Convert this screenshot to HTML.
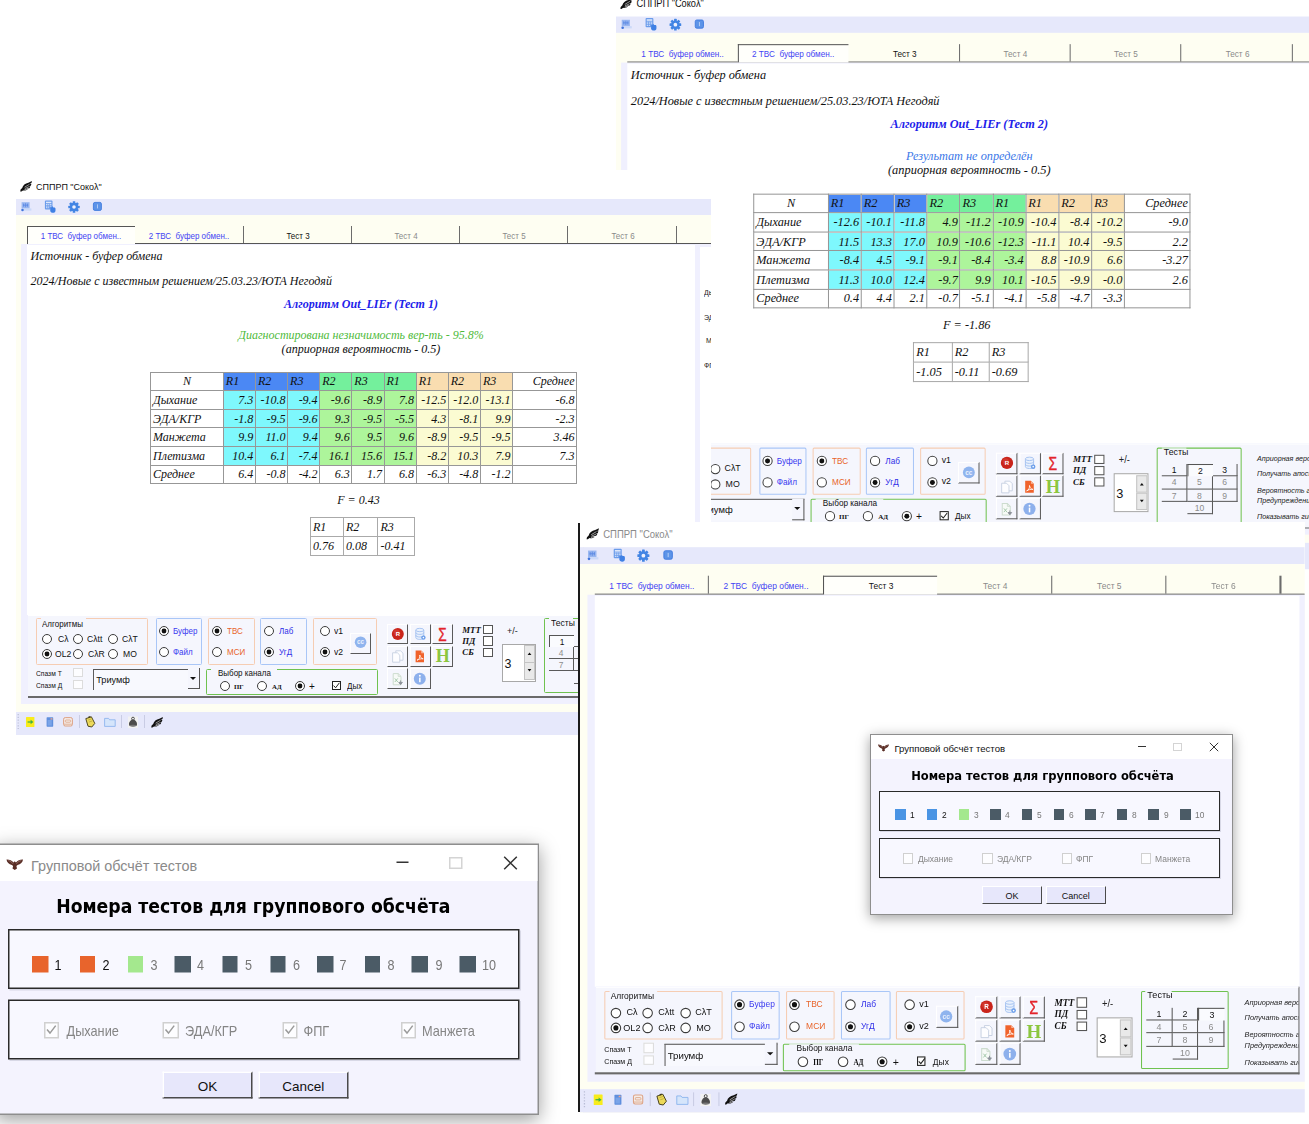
<!DOCTYPE html>
<html lang="ru"><head><meta charset="utf-8"><title>СППРП "Сокоλ"</title>
<style>
html,body{margin:0;padding:0;background:#fff}
body{width:1309px;height:1124px;position:relative;overflow:hidden;font-family:"Liberation Sans", "DejaVu Sans", sans-serif}
.win,.dlg{position:absolute;overflow:hidden;background:#fff;transform-origin:0 0}
.win *,.dlg *{position:absolute;box-sizing:border-box}
.t{line-height:1;white-space:nowrap;color:#111;font-family:"Liberation Sans", "DejaVu Sans", sans-serif}
.se{font-family:"Liberation Serif", "DejaVu Serif", serif}
.dj{font-family:"DejaVu Sans Condensed","Liberation Sans",sans-serif}
.i{font-style:italic}.b{font-weight:700}
.ic{display:block;overflow:visible}
svg text{position:static}
.rd{width:10px;height:10px;border:1px solid #3c3c3c;border-radius:50%;background:#fff}
.rd.on:after{content:"";position:absolute;left:2px;top:2px;width:4px;height:4px;border-radius:50%;background:#111;box-shadow:0 0 0 .4px #111}
.pn{background:#f5f6fd}
.gb{border:1px solid #ccc;border-radius:1.5px}
.gb b{top:-1px;height:1px;background:#f5f6fd}
.cb{border:1px solid #555;background:#fff}
.cb.dis{border-color:#dcdcdc;background:#fdfdff}
.cb.dis2{border-color:#d0d0d0;background:#fdfdff}
.cb.chk{border-color:#222}
.cb svg{left:-1px;top:-1px}
.tb{width:20.8px;height:20.8px;border-right:1.6px solid #5a5a5a;border-bottom:1.6px solid #5a5a5a;border-top:1px solid #fff;border-left:1px solid #fff;background:#f5f6fd}
.tb svg{left:-0.5px;top:-0.5px;position:absolute}
.tb.cc{width:21.4px;height:21.2px}
.cmb{border-top:1.8px solid #555;border-left:1.6px solid #5c5c5c;background:#f8f9fe}
.cmb i{right:0;top:0;width:12px;height:21px;border-right:1.4px solid #555;border-bottom:1.4px solid #555;background:#f5f6fd;margin-top:-1.6px}
.cmb i:after{content:"";position:absolute;left:2px;top:8.6px;border:3px solid transparent;border-top:3.4px solid #111;border-bottom:none}
.spn{width:34px;height:38px;border:1px solid #a8a8a8;background:#fff}
.spn em{left:21.2px;width:11px;height:17.4px;background:#e9e9e9;border:1px solid #c4c4c4}
.tt{width:24.6px;height:12.2px;font-size:8.4px;line-height:13px;text-align:center;color:#8c8c8c;border-right:1.4px solid #5a5a5a;border-bottom:1.4px solid #5a5a5a}
.tt.en{color:#111}
.tt.sel{border:none;border-top:1.4px solid #555;border-left:1.4px solid #555;background:#fafbfe}
table.rt{border-collapse:collapse;table-layout:fixed;font:italic 12px "Liberation Serif", "DejaVu Serif", serif;color:#111}
table.rt *{position:static}
table.rt td{border:1px solid #979797;height:18.62px;padding:0 1.6px 0 2px;text-align:right;line-height:16px;white-space:nowrap;overflow:hidden;box-sizing:border-box}
table.rt td.l{text-align:left}table.rt td.c{text-align:center}
table.rt.sm td{height:18.8px;border-color:#aaa}
.dlg{background:#f4f3fe;box-shadow:0 0 0 1px #8e8e8e,0 3px 12px 1px rgba(0,0,0,.38);overflow:visible}
.dbx{border:1px solid #2a2a2a;box-shadow:1px 1px 0 #d8d8e6;background:#f8f8ff}
.db{height:18.3px;background:#e7e7fb;border-right:1.6px solid #4a4a4a;border-bottom:1.6px solid #4a4a4a;border-top:1px solid #fff;border-left:1px solid #fff;font-size:9px;line-height:18.4px;text-align:center;color:#111}
.abs{position:absolute}
</style></head>
<body>
<div class="win" style="left:616.00px;top:-4.6px;width:700px;height:560.8px;transform:scale(1.024);"><svg class="ic" style="left:3.5px;top:3.3px" width="12" height="11" viewBox="0 0 12 11"><path d="M0.2 10.4 L0.6 8.6 L2.2 7 C2.8 4.4 5.2 2.4 8.4 1.8 L11.9 0.1 L11.5 2.1 L9.8 2.9 L11.4 3 L10.8 4.7 L8.8 5.2 L10.4 5.6 L9.4 7.2 L6.6 7.6 L7.8 8.3 C6.2 9.6 4.2 9.8 3 9.4 L1.4 10.6 Z" fill="#111"/><path d="M4.6 6.2 L9.6 3.2 M4.8 7.6 L9.2 5.6 M4.4 8.8 L7.4 8" stroke="#fff" stroke-width="0.55" fill="none"/></svg><span class="t " style="top:4.40px;font-size:9.81px;left:19.60px;transform:scaleX(0.9174);transform-origin:0 0;color:#111;">СППРП "Сокоλ"</span><div class="abs" style="left:0.00px;top:21.00px;width:700.00px;height:16.00px;background:#e6e8fb"></div><svg class="ic" style="left:4.6px;top:23.6px" width="11" height="10" viewBox="0 0 11 10"><rect x="0.6" y="0.2" width="8" height="6.4" fill="#98b6f0"/><path d="M2.6 1.6v3.2M4.6 1.2v4M6.6 1.6v3.2M2 3.2h5.2" stroke="#5a88e3" stroke-width="0.8" fill="none"/><rect x="0.6" y="6.4" width="9.8" height="2.2" fill="#cbd9f8"/><circle cx="1.5" cy="8" r="1.25" fill="#3f74dc"/></svg><svg class="ic" style="left:28px;top:22px" width="12" height="13" viewBox="0 0 12 13"><rect x="0.9" y="0.5" width="7.6" height="9" rx="0.9" fill="#6b9ceb"/><rect x="2" y="1.7" width="5.4" height="1.5" fill="#dfe9fb"/><path d="M2 4.5h5.4M2 6.1h5.4M2 7.7h3.4" stroke="#dfe9fb" stroke-width="0.9"/><path d="M3.75 4v4.4M5.6 4v4.4" stroke="#6b9ceb" stroke-width="0.7"/><path d="M6.6 7.4h1l0.4-0.8h0.9l0.4 0.8h0.9c0.9 0 1.3 0.6 1.3 1.4v1.6c0 1.4-1 2.3-2.5 2.3s-2.8-0.9-2.8-2.3z" fill="#3f80e4"/></svg><svg class="ic" style="left:51.6px;top:22.8px" width="12" height="12" viewBox="0 0 12 12"><g fill="#4285e4"><circle cx="6" cy="6" r="4.2"/><rect x="4.7" y="0.3" width="2.6" height="11.4" rx="0.5" transform="rotate(0 6 6)"/><rect x="4.7" y="0.3" width="2.6" height="11.4" rx="0.5" transform="rotate(45 6 6)"/><rect x="4.7" y="0.3" width="2.6" height="11.4" rx="0.5" transform="rotate(90 6 6)"/><rect x="4.7" y="0.3" width="2.6" height="11.4" rx="0.5" transform="rotate(135 6 6)"/></g><circle cx="6" cy="6" r="1.8" fill="#eef1fd"/></svg><svg class="ic" style="left:76.6px;top:24.4px" width="9" height="9" viewBox="0 0 9 9"><rect x="0.4" y="0.4" width="8" height="8" rx="1.5" fill="#5d94e8" stroke="#3f7ade" stroke-width="0.9"/><rect x="4" y="2.4" width="0.9" height="4" fill="#b9d0f6"/></svg><div class="abs" style="left:0.00px;top:37.00px;width:700.00px;height:497.80px;background:#fefef2"></div><div class="abs" style="left:11.00px;top:64.70px;width:689.00px;height:1.35px;background:#555"></div><span class="t " style="top:53.52px;font-size:8.72px;left:-84.85px;width:300px;text-align:center;transform:scaleX(0.9174);transform-origin:50% 0;color:#4444f4;white-space:pre;">1 ТВС  буфер обмен..</span><div class="abs" style="left:119.30px;top:48.40px;width:107.80px;height:18.00px;background:#fffffb;border-top:1.6px solid #555;border-left:1.6px solid #555;box-sizing:border-box"></div><span class="t " style="top:53.52px;font-size:8.72px;left:23.45px;width:300px;text-align:center;transform:scaleX(0.9174);transform-origin:50% 0;color:#4444f4;white-space:pre;">2 ТВС  буфер обмен..</span><div class="abs" style="left:334.80px;top:48.40px;width:1.10px;height:17.00px;background:#6c6c6c"></div><span class="t " style="top:53.52px;font-size:8.72px;left:131.75px;width:300px;text-align:center;transform:scaleX(0.9174);transform-origin:50% 0;color:#111;white-space:pre;">Тест 3</span><div class="abs" style="left:443.10px;top:48.40px;width:1.10px;height:17.00px;background:#6c6c6c"></div><span class="t " style="top:53.52px;font-size:8.72px;left:240.05px;width:300px;text-align:center;transform:scaleX(0.9174);transform-origin:50% 0;color:#8a8a8a;white-space:pre;">Тест 4</span><div class="abs" style="left:551.40px;top:48.40px;width:1.10px;height:17.00px;background:#6c6c6c"></div><span class="t " style="top:53.52px;font-size:8.72px;left:348.35px;width:300px;text-align:center;transform:scaleX(0.9174);transform-origin:50% 0;color:#8a8a8a;white-space:pre;">Тест 5</span><div class="abs" style="left:659.70px;top:48.40px;width:1.10px;height:17.00px;background:#6c6c6c"></div><span class="t " style="top:53.52px;font-size:8.72px;left:456.65px;width:300px;text-align:center;transform:scaleX(0.9174);transform-origin:50% 0;color:#8a8a8a;white-space:pre;">Тест 6</span><div class="abs" style="left:4.60px;top:66.20px;width:695.40px;height:461.20px;background:#f0f0fe"></div><div class="abs" style="left:11.00px;top:67.10px;width:667.70px;height:371.30px;background:#fff"></div><span class="t se i" style="top:72.45px;font-size:12px;left:14.50px;">Источник - буфер обмена</span><span class="t se i" style="top:96.95px;font-size:12px;left:14.50px;">2024/Новые с известным решением/25.03.23/ЮТА Негодяй</span><span class="t se i b" style="top:119.95px;font-size:12px;left:195.00px;width:300px;text-align:center;color:#2121ea;">Алгоритм Out_LIEr (Тест 2)</span><span class="t se i" style="top:150.55px;font-size:12px;left:195.00px;width:300px;text-align:center;color:#3c78e8;">Результат не определён</span><span class="t se i" style="top:164.67px;font-size:12.1px;left:195.00px;width:300px;text-align:center;color:#111;">(априорная вероятность - 0.5)</span><table class="rt" style="left:134.00px;top:193.60px;width:426.2px"><tr><td class="c" style="width:72.8px">N</td><td class="l" style="width:32.15px;background:#4b88f4">R1</td><td class="l" style="width:32.15px;background:#4b88f4">R2</td><td class="l" style="width:32.15px;background:#4b88f4">R3</td><td class="l" style="width:32.15px;background:#74f09c">R2</td><td class="l" style="width:32.15px;background:#74f09c">R3</td><td class="l" style="width:32.15px;background:#74f09c">R1</td><td class="l" style="width:32.15px;background:#f9ddb0">R1</td><td class="l" style="width:32.15px;background:#f9ddb0">R2</td><td class="l" style="width:32.15px;background:#f9ddb0">R3</td><td style="width:64px">Среднее</td></tr><tr><td class="l">Дыхание</td><td style="background:#7ef8fd">-12.6</td><td style="background:#7ef8fd">-10.1</td><td style="background:#7ef8fd">-11.8</td><td style="background:#adf59b">4.9</td><td style="background:#adf59b">-11.2</td><td style="background:#adf59b">-10.9</td><td style="background:#fbfbd2">-10.4</td><td style="background:#fbfbd2">-8.4</td><td style="background:#fbfbd2">-10.2</td><td>-9.0</td></tr><tr><td class="l">ЭДА/КГР</td><td style="background:#7ef8fd">11.5</td><td style="background:#7ef8fd">13.3</td><td style="background:#7ef8fd">17.0</td><td style="background:#adf59b">10.9</td><td style="background:#adf59b">-10.6</td><td style="background:#adf59b">-12.3</td><td style="background:#fbfbd2">-11.1</td><td style="background:#fbfbd2">10.4</td><td style="background:#fbfbd2">-9.5</td><td>2.2</td></tr><tr><td class="l">Манжета</td><td style="background:#7ef8fd">-8.4</td><td style="background:#7ef8fd">4.5</td><td style="background:#7ef8fd">-9.1</td><td style="background:#adf59b">-9.1</td><td style="background:#adf59b">-8.4</td><td style="background:#adf59b">-3.4</td><td style="background:#fbfbd2">8.8</td><td style="background:#fbfbd2">-10.9</td><td style="background:#fbfbd2">6.6</td><td>-3.27</td></tr><tr><td class="l">Плетизма</td><td style="background:#7ef8fd">11.3</td><td style="background:#7ef8fd">10.0</td><td style="background:#7ef8fd">12.4</td><td style="background:#adf59b">-9.7</td><td style="background:#adf59b">9.9</td><td style="background:#adf59b">10.1</td><td style="background:#fbfbd2">-10.5</td><td style="background:#fbfbd2">-9.9</td><td style="background:#fbfbd2">-0.0</td><td>2.6</td></tr><tr><td class="l">Среднее</td><td>0.4</td><td>4.4</td><td>2.1</td><td>-0.7</td><td>-5.1</td><td>-4.1</td><td>-5.8</td><td>-4.7</td><td>-3.3</td><td></td></tr></table><span class="t se i" style="top:315.75px;font-size:12px;left:192.50px;width:300px;text-align:center;color:#111;">F = -1.86</span><table class="rt sm" style="left:290.20px;top:339.00px;width:111.60px"><tr><td class="l" style="width:37.6px">R1</td><td class="l" style="width:36.2px">R2</td><td class="l" style="width:37.8px">R3</td></tr><tr><td class="l">-1.05</td><td class="l">-0.11</td><td class="l">-0.69</td></tr></table><div class="pn" style="left:12px;top:438.4px;width:666.7px;height:82.6px;overflow:hidden;border-right:1.5px solid #6a6a6a"><div class="abs" style="left:0.00px;top:0.00px;width:666.70px;height:0.90px;background:#fff"></div><div class="gb" style="left:8.30px;top:3.30px;width:112.10px;height:46.50px;border-color:#f6cdb3"><b style="left:3.70px;width:45.50px"></b></div><span class="t " style="top:4.52px;font-size:8.72px;left:14.40px;transform:scaleX(0.9174);transform-origin:0 0;color:#111;">Алгоритмы</span><i class="rd" style="left:14.00px;top:19.30px"></i><span class="t " style="top:19.67px;font-size:9.37px;left:29.60px;transform:scaleX(0.9174);transform-origin:0 0;color:#111;">Cλ</span><i class="rd" style="left:44.60px;top:19.30px"></i><span class="t " style="top:19.67px;font-size:9.37px;left:59.20px;transform:scaleX(0.9174);transform-origin:0 0;color:#111;">Cλtt</span><i class="rd" style="left:80.30px;top:19.30px"></i><span class="t " style="top:19.67px;font-size:9.37px;left:94.30px;transform:scaleX(0.9174);transform-origin:0 0;color:#111;">CλT</span><i class="rd on" style="left:14.00px;top:34.20px"></i><span class="t " style="top:34.67px;font-size:9.37px;left:26.60px;transform:scaleX(0.9174);transform-origin:0 0;color:#111;">OL2</span><i class="rd" style="left:44.60px;top:34.20px"></i><span class="t " style="top:34.67px;font-size:9.37px;left:59.70px;transform:scaleX(0.9174);transform-origin:0 0;color:#111;">CλR</span><i class="rd" style="left:80.30px;top:34.20px"></i><span class="t " style="top:34.67px;font-size:9.37px;left:95.20px;transform:scaleX(0.9174);transform-origin:0 0;color:#111;">MO</span><div class="gb" style="left:127.80px;top:3.30px;width:46.50px;height:46.50px;border-color:#a9c6f7"></div><i class="rd on" style="left:131.00px;top:11.30px"></i><span class="t " style="top:12.12px;font-size:8.72px;left:145.40px;transform:scaleX(0.9174);transform-origin:0 0;color:#3a3af0;">Буфер</span><i class="rd" style="left:131.00px;top:32.40px"></i><span class="t " style="top:33.22px;font-size:8.72px;left:145.40px;transform:scaleX(0.9174);transform-origin:0 0;color:#3a3af0;">Файл</span><div class="gb" style="left:180.20px;top:3.30px;width:46.50px;height:46.50px;border-color:#f6cdb3"></div><i class="rd on" style="left:183.60px;top:11.30px"></i><span class="t " style="top:12.12px;font-size:8.72px;left:199.00px;transform:scaleX(0.9174);transform-origin:0 0;color:#e8642a;">ТВС</span><i class="rd" style="left:183.60px;top:32.40px"></i><span class="t " style="top:33.22px;font-size:8.72px;left:199.00px;transform:scaleX(0.9174);transform-origin:0 0;color:#e8642a;">МСИ</span><div class="gb" style="left:232.20px;top:3.30px;width:46.80px;height:46.50px;border-color:#a9c6f7"></div><i class="rd" style="left:235.90px;top:11.30px"></i><span class="t " style="top:12.12px;font-size:8.72px;left:251.00px;transform:scaleX(0.9174);transform-origin:0 0;color:#2f2fe8;">Лаб</span><i class="rd on" style="left:235.90px;top:32.40px"></i><span class="t " style="top:33.22px;font-size:8.72px;left:251.00px;transform:scaleX(0.9174);transform-origin:0 0;color:#2f2fe8;">УгД</span><div class="gb" style="left:284.60px;top:3.30px;width:64.70px;height:46.50px;border-color:#f6cdb3"></div><i class="rd" style="left:291.80px;top:11.30px"></i><span class="t " style="top:11.57px;font-size:9.37px;left:306.00px;transform:scaleX(0.9174);transform-origin:0 0;color:#111;">v1</span><i class="rd on" style="left:291.80px;top:32.40px"></i><span class="t " style="top:32.67px;font-size:9.37px;left:306.00px;transform:scaleX(0.9174);transform-origin:0 0;color:#111;">v2</span><div class="tb cc" style="left:322.00px;top:17.80px"><svg width="19" height="19" viewBox="0 0 19 19"><circle cx="9.6" cy="9.2" r="5.8" fill="#8fb4ee"/><text x="9.6" y="11.3" font-size="6.4" font-weight="700" fill="#e9f0fd" text-anchor="middle" font-family='"Liberation Sans",sans-serif'>cc</text></svg></div><span class="t " style="top:55.42px;font-size:7.3px;left:8.30px;transform:scaleX(0.9174);transform-origin:0 0;color:#111;">Спазм Т</span><span class="t " style="top:67.12px;font-size:7.3px;left:8.30px;transform:scaleX(0.9174);transform-origin:0 0;color:#111;">Спазм Д</span><div class="cb dis" style="left:45.40px;top:53.10px;width:9.40px;height:9.20px;"></div><div class="cb dis" style="left:45.40px;top:65.00px;width:9.40px;height:9.20px;"></div><div class="cmb" style="left:65.00px;top:53.80px;width:106.8px;height:21px"><span class="t" style="left:2.2px;top:5.8px;font-size:9.2px;color:#111">Триумф</span><i></i></div><div class="gb" style="left:177.50px;top:53.80px;width:172.50px;height:25.80px;border-color:#6fc24f"><b style="left:4.30px;width:66.60px"></b></div><span class="t " style="top:54.02px;font-size:8.72px;left:189.80px;transform:scaleX(0.9174);transform-origin:0 0;color:#111;">Выбор канала</span><i class="rd" style="left:191.70px;top:66.00px"></i><span class="t se b" style="top:68.50px;font-size:6.8px;left:205.90px;color:#111;">ПГ</span><i class="rd" style="left:229.00px;top:66.00px"></i><span class="t se b" style="top:68.50px;font-size:6.8px;left:244.00px;color:#111;">АД</span><i class="rd on" style="left:266.60px;top:66.00px"></i><span class="t " style="top:65.97px;font-size:10.9px;left:281.40px;transform:scaleX(0.9174);transform-origin:0 0;color:#111;">+</span><div class="cb chk" style="left:304.00px;top:66.00px;width:8.6px;height:8.6px"><svg width="9" height="9" viewBox="0 0 9 9"><path d="M1.6 4.6l2 2.2 3.8-5" fill="none" stroke="#222" stroke-width="1"/></svg></div><span class="t " style="top:66.92px;font-size:8.72px;left:319.00px;transform:scaleX(0.9174);transform-origin:0 0;color:#111;">Дых</span><div class="tb" style="left:359.30px;top:8.50px"><svg width="19" height="19" viewBox="0 0 19 19"><circle cx="9.8" cy="10" r="6" fill="#c9241b"/><circle cx="8.6" cy="8.4" r="3" fill="#d8453b" opacity="0.6"/><text x="9.9" y="12.2" font-size="6" font-weight="700" fill="#fff" text-anchor="middle" font-family='"Liberation Sans",sans-serif'>R</text></svg></div><div class="tb" style="left:381.80px;top:8.50px"><svg width="19" height="19" viewBox="0 0 19 19"><g fill="#e9f1fd" stroke="#a3c1f0" stroke-width="0.9"><path d="M5.8 6v7.6c0 1.1 1.8 1.8 4 1.8s4-0.7 4-1.8V6"/><ellipse cx="9.8" cy="6" rx="4" ry="1.7"/><path d="M5.8 8.6c0 1.1 1.8 1.8 4 1.8s4-0.7 4-1.8M5.8 11.2c0 1.1 1.8 1.8 4 1.8s4-0.7 4-1.8" fill="none"/></g><circle cx="13.4" cy="13.6" r="2.2" fill="#6d9fea"/><circle cx="13.4" cy="13.6" r="0.8" fill="#fff"/></svg></div><div class="tb" style="left:404.30px;top:8.50px"><svg width="19" height="19" viewBox="0 0 19 19"><text x="12.2" y="16.6" font-size="17.5" fill="#e3242b" stroke="#e3242b" stroke-width="0.35" text-anchor="middle" transform="scale(0.78,1)" font-family='"Liberation Sans","DejaVu Sans",sans-serif'>Σ</text></svg></div><div class="tb" style="left:359.30px;top:30.80px"><svg width="19" height="19" viewBox="0 0 19 19"><g fill="#fdfdff" stroke="#c6d0e2" stroke-width="0.9"><path d="M7.8 4.8h4.8l2.4 2.4v7h-7.2z"/><path d="M4.6 6.8h4.8l2.4 2.4v7h-7.2z"/></g></svg></div><div class="tb" style="left:381.80px;top:30.80px"><svg width="19" height="19" viewBox="0 0 19 19"><path d="M5.6 4.4h5.6l2.8 2.8v9h-8.4z" fill="#f0632c"/><path d="M11.2 4.4v2.8h2.8z" fill="#f9b79c"/><path d="M7 14.2c2-0.6 3-2.4 2.8-5.2c0.6 2.6 1.6 3.6 3.4 3.8c-2.4-0.2-4.4 0.4-6.2 1.4z" fill="none" stroke="#fff" stroke-width="0.8"/></svg></div><div class="tb" style="left:404.30px;top:30.80px"><svg width="19" height="19" viewBox="0 0 19 19"><text x="9.7" y="16.3" font-size="18" font-weight="700" fill="#8cc63f" text-anchor="middle" font-family='"Liberation Serif","DejaVu Serif",serif'>H</text></svg></div><div class="tb" style="left:359.30px;top:53.10px"><svg width="19" height="19" viewBox="0 0 19 19"><path d="M5.2 4.6h5l2.8 2.8v8.4h-7.8z" fill="#f7faf7" stroke="#cddccf" stroke-width="1"/><path d="M10.2 4.6v2.8h2.8" fill="none" stroke="#cddccf" stroke-width="0.9"/><path d="M6.8 9.4l3 3.6M9.8 9.4l-3 3.6" stroke="#9fc5a6" stroke-width="0.9"/><path d="M12.6 11.4v3.2M10.8 13.4l1.8 2.2 1.8-2.2z" stroke="#8b9099" fill="#8b9099" stroke-width="0.9"/></svg></div><div class="tb" style="left:381.80px;top:53.10px"><svg width="19" height="19" viewBox="0 0 19 19"><circle cx="9.8" cy="9.8" r="6" fill="#8db0ec"/><rect x="9.1" y="8.6" width="1.5" height="4.6" fill="#fff"/><circle cx="9.85" cy="6.8" r="0.95" fill="#fff"/></svg></div><span class="t se i b" style="top:10.93px;font-size:8.8px;left:434.30px;color:#111;">МТТ</span><div class="cb" style="left:455.40px;top:10.20px;width:9.50px;height:9.30px;"></div><span class="t se i b" style="top:22.03px;font-size:8.8px;left:434.30px;color:#111;">ПД</span><div class="cb" style="left:455.40px;top:21.40px;width:9.50px;height:9.30px;"></div><span class="t se i b" style="top:33.13px;font-size:8.8px;left:434.30px;color:#111;">СБ</span><div class="cb" style="left:455.40px;top:32.60px;width:9.50px;height:9.30px;"></div><span class="t " style="top:11.10px;font-size:9.81px;left:479.00px;transform:scaleX(0.9174);transform-origin:0 0;color:#222;">+/-</span><div class="spn" style="left:474.00px;top:28.80px"><span class="t" style="left:1.6px;top:13.2px;font-size:12.4px;color:#111">3</span><em style="top:0.6px"><svg width="9" height="15" viewBox="0 0 9 15"><path d="M2.6 9l1.9-2.4 1.9 2.4z" fill="#111"/></svg></em><em style="top:17.6px"><svg width="9" height="15" viewBox="0 0 9 15"><path d="M2.6 6l1.9 2.4 1.9-2.4z" fill="#111"/></svg></em></div><div class="gb" style="left:516.00px;top:3.30px;width:83.00px;height:74.30px;border-color:#6fc24f"><b style="left:3.50px;width:24.50px"></b></div><span class="t " style="top:3.97px;font-size:9.37px;left:522.60px;transform:scaleX(0.9174);transform-origin:0 0;color:#111;">Тесты</span><div class="tt en" style="left:521.40px;top:19.90px">1</div><div class="tt sel en" style="left:546.00px;top:19.90px">2</div><div class="tt en" style="left:570.60px;top:19.90px">3</div><div class="tt" style="left:521.40px;top:32.05px">4</div><div class="tt" style="left:546.00px;top:32.05px">5</div><div class="tt" style="left:570.60px;top:32.05px">6</div><div class="tt" style="left:521.40px;top:44.20px">7</div><div class="tt" style="left:546.00px;top:44.20px">8</div><div class="tt" style="left:570.60px;top:44.20px">9</div><div class="tt" style="left:546.00px;top:56.35px">10</div><span class="t i" style="top:10.84px;font-size:7.63px;left:614.20px;transform:scaleX(0.9174);transform-origin:0 0;color:#222;">Априорная веро</span><span class="t i" style="top:25.84px;font-size:7.63px;left:614.20px;transform:scaleX(0.9174);transform-origin:0 0;color:#222;">Получать апост</span><span class="t i" style="top:41.54px;font-size:7.63px;left:614.20px;transform:scaleX(0.9174);transform-origin:0 0;color:#222;">Вероятность ар</span><span class="t i" style="top:52.04px;font-size:7.63px;left:614.20px;transform:scaleX(0.9174);transform-origin:0 0;color:#222;">Предупреждени</span><span class="t i" style="top:67.74px;font-size:7.63px;left:614.20px;transform:scaleX(0.9174);transform-origin:0 0;color:#222;">Показывать гис</span></div><div class="abs" style="left:11.50px;top:519.60px;width:667.20px;height:1.70px;background:#6a6a6a"></div><div class="abs" style="left:0.00px;top:534.80px;width:700.00px;height:26.00px;background:#e6e8fb"></div><svg class="ic" style="left:0.5px;top:538.85px" width="3" height="15" viewBox="0 0 3 15"><path d="M1.2 0v15" stroke="#b9bdd6" stroke-width="1.2" stroke-dasharray="1.2 1.6"/></svg><svg class="ic" style="left:10px;top:541.55px" width="9" height="10" viewBox="0 0 9 10"><rect width="8.4" height="10" rx="0.6" fill="#f8ec1c"/><path d="M1.6 5h4" stroke="#3cb043" stroke-width="1.2" fill="none"/><path d="M4.6 2.8l2.8 2.2-2.8 2.2z" fill="#3cb043"/></svg><svg class="ic" style="left:29.5px;top:541.55px" width="8" height="10" viewBox="0 0 8 10"><rect x="0.6" y="0.3" width="6.6" height="9.4" rx="0.6" fill="#5f8fdd"/><rect x="1.6" y="3" width="4.2" height="5.6" fill="#7aa4e8"/><rect x="4.6" y="1.2" width="1.8" height="1.4" fill="#f2a68a"/></svg><svg class="ic" style="left:47px;top:541.55px" width="10" height="10" viewBox="0 0 10 10"><rect x="0.6" y="0.6" width="8.8" height="8.4" rx="1.6" fill="#f4ece8" stroke="#dda284" stroke-width="1"/><rect x="2.4" y="3" width="5.2" height="2.2" rx="0.6" fill="none" stroke="#dda284" stroke-width="0.8"/><path d="M1 7.2h8" stroke="#dda284" stroke-width="0.8"/></svg><div class="abs" style="left:63.00px;top:539.85px;width:1.00px;height:13.00px;background:#c9cce4"></div><svg class="ic" style="left:69px;top:540.55px" width="11" height="12" viewBox="0 0 11 12"><path d="M0.8 2.6 L6.4 0.8 L9.8 7.4 L6.8 11 L3 10.2 Z" fill="#ecd95a" stroke="#3f3a18" stroke-width="0.9"/><path d="M3.4 1.4l2-0.8" stroke="#3f3a18" stroke-width="1.2"/><path d="M3.2 4l3.2-1M4 6l3.2-1" stroke="#a89a38" stroke-width="0.6"/></svg><svg class="ic" style="left:88px;top:541.55px" width="12" height="10" viewBox="0 0 12 10"><path d="M0.6 1.4h4l1 1.4h5.6v6.6h-10.6z" fill="#d5e5fb" stroke="#8fb6ee" stroke-width="0.9"/></svg><div class="abs" style="left:104.50px;top:539.85px;width:1.00px;height:13.00px;background:#c9cce4"></div><svg class="ic" style="left:111.5px;top:540.55px" width="10" height="12" viewBox="0 0 10 12"><rect x="0" y="0.5" width="10" height="11.5" fill="#f2f2f2"/><circle cx="5" cy="2.6" r="1.4" fill="none" stroke="#444" stroke-width="0.9"/><path d="M3.6 3.8 L6.4 3.8 C8.6 5.4 9.6 7.6 8.8 9.4 Q5 11.4 1.2 9.4 C0.4 7.6 1.4 5.4 3.6 3.8 Z" fill="#4c4c4c"/><ellipse cx="5" cy="9.6" rx="3.6" ry="0.9" fill="#777"/></svg><div class="abs" style="left:128.00px;top:539.85px;width:1.00px;height:13.00px;background:#c9cce4"></div><svg class="ic" style="left:134.5px;top:541.05px" width="12" height="11" viewBox="0 0 12 11"><path d="M0.2 10.4 L0.6 8.6 L2.2 7 C2.8 4.4 5.2 2.4 8.4 1.8 L11.9 0.1 L11.5 2.1 L9.8 2.9 L11.4 3 L10.8 4.7 L8.8 5.2 L10.4 5.6 L9.4 7.2 L6.6 7.6 L7.8 8.3 C6.2 9.6 4.2 9.8 3 9.4 L1.4 10.6 Z" fill="#111"/><path d="M4.6 6.2 L9.6 3.2 M4.8 7.6 L9.2 5.6 M4.4 8.8 L7.4 8" stroke="#fff" stroke-width="0.55" fill="none"/></svg></div>
<div style="position:absolute;left:0;top:170px;width:711px;height:580px;background:#fff"></div><div class="win" style="left:16.00px;top:178px;width:695px;height:556.7px;"><svg class="ic" style="left:3.5px;top:3.3px" width="12" height="11" viewBox="0 0 12 11"><path d="M0.2 10.4 L0.6 8.6 L2.2 7 C2.8 4.4 5.2 2.4 8.4 1.8 L11.9 0.1 L11.5 2.1 L9.8 2.9 L11.4 3 L10.8 4.7 L8.8 5.2 L10.4 5.6 L9.4 7.2 L6.6 7.6 L7.8 8.3 C6.2 9.6 4.2 9.8 3 9.4 L1.4 10.6 Z" fill="#111"/><path d="M4.6 6.2 L9.6 3.2 M4.8 7.6 L9.2 5.6 M4.4 8.8 L7.4 8" stroke="#fff" stroke-width="0.55" fill="none"/></svg><span class="t " style="top:4.40px;font-size:9.81px;left:19.60px;transform:scaleX(0.9174);transform-origin:0 0;color:#111;">СППРП "Сокоλ"</span><div class="abs" style="left:0.00px;top:21.00px;width:695.00px;height:16.00px;background:#e6e8fb"></div><svg class="ic" style="left:4.6px;top:23.6px" width="11" height="10" viewBox="0 0 11 10"><rect x="0.6" y="0.2" width="8" height="6.4" fill="#98b6f0"/><path d="M2.6 1.6v3.2M4.6 1.2v4M6.6 1.6v3.2M2 3.2h5.2" stroke="#5a88e3" stroke-width="0.8" fill="none"/><rect x="0.6" y="6.4" width="9.8" height="2.2" fill="#cbd9f8"/><circle cx="1.5" cy="8" r="1.25" fill="#3f74dc"/></svg><svg class="ic" style="left:28px;top:22px" width="12" height="13" viewBox="0 0 12 13"><rect x="0.9" y="0.5" width="7.6" height="9" rx="0.9" fill="#6b9ceb"/><rect x="2" y="1.7" width="5.4" height="1.5" fill="#dfe9fb"/><path d="M2 4.5h5.4M2 6.1h5.4M2 7.7h3.4" stroke="#dfe9fb" stroke-width="0.9"/><path d="M3.75 4v4.4M5.6 4v4.4" stroke="#6b9ceb" stroke-width="0.7"/><path d="M6.6 7.4h1l0.4-0.8h0.9l0.4 0.8h0.9c0.9 0 1.3 0.6 1.3 1.4v1.6c0 1.4-1 2.3-2.5 2.3s-2.8-0.9-2.8-2.3z" fill="#3f80e4"/></svg><svg class="ic" style="left:51.6px;top:22.8px" width="12" height="12" viewBox="0 0 12 12"><g fill="#4285e4"><circle cx="6" cy="6" r="4.2"/><rect x="4.7" y="0.3" width="2.6" height="11.4" rx="0.5" transform="rotate(0 6 6)"/><rect x="4.7" y="0.3" width="2.6" height="11.4" rx="0.5" transform="rotate(45 6 6)"/><rect x="4.7" y="0.3" width="2.6" height="11.4" rx="0.5" transform="rotate(90 6 6)"/><rect x="4.7" y="0.3" width="2.6" height="11.4" rx="0.5" transform="rotate(135 6 6)"/></g><circle cx="6" cy="6" r="1.8" fill="#eef1fd"/></svg><svg class="ic" style="left:76.6px;top:24.4px" width="9" height="9" viewBox="0 0 9 9"><rect x="0.4" y="0.4" width="8" height="8" rx="1.5" fill="#5d94e8" stroke="#3f7ade" stroke-width="0.9"/><rect x="4" y="2.4" width="0.9" height="4" fill="#b9d0f6"/></svg><div class="abs" style="left:0.00px;top:37.00px;width:695.00px;height:496.80px;background:#fefef2"></div><div class="abs" style="left:11.00px;top:64.70px;width:684.00px;height:1.35px;background:#555"></div><div class="abs" style="left:11.00px;top:48.40px;width:107.80px;height:18.00px;background:#fffffb;border-top:1.6px solid #555;border-left:1.6px solid #555;box-sizing:border-box"></div><span class="t " style="top:53.52px;font-size:8.72px;left:-84.85px;width:300px;text-align:center;transform:scaleX(0.9174);transform-origin:50% 0;color:#4444f4;white-space:pre;">1 ТВС  буфер обмен..</span><div class="abs" style="left:226.50px;top:48.40px;width:1.10px;height:17.00px;background:#6c6c6c"></div><span class="t " style="top:53.52px;font-size:8.72px;left:23.45px;width:300px;text-align:center;transform:scaleX(0.9174);transform-origin:50% 0;color:#4444f4;white-space:pre;">2 ТВС  буфер обмен..</span><div class="abs" style="left:334.80px;top:48.40px;width:1.10px;height:17.00px;background:#6c6c6c"></div><span class="t " style="top:53.52px;font-size:8.72px;left:131.75px;width:300px;text-align:center;transform:scaleX(0.9174);transform-origin:50% 0;color:#111;white-space:pre;">Тест 3</span><div class="abs" style="left:443.10px;top:48.40px;width:1.10px;height:17.00px;background:#6c6c6c"></div><span class="t " style="top:53.52px;font-size:8.72px;left:240.05px;width:300px;text-align:center;transform:scaleX(0.9174);transform-origin:50% 0;color:#8a8a8a;white-space:pre;">Тест 4</span><div class="abs" style="left:551.40px;top:48.40px;width:1.10px;height:17.00px;background:#6c6c6c"></div><span class="t " style="top:53.52px;font-size:8.72px;left:348.35px;width:300px;text-align:center;transform:scaleX(0.9174);transform-origin:50% 0;color:#8a8a8a;white-space:pre;">Тест 5</span><div class="abs" style="left:659.70px;top:48.40px;width:1.10px;height:17.00px;background:#6c6c6c"></div><span class="t " style="top:53.52px;font-size:8.72px;left:456.65px;width:300px;text-align:center;transform:scaleX(0.9174);transform-origin:50% 0;color:#8a8a8a;white-space:pre;">Тест 6</span><div class="abs" style="left:4.60px;top:66.20px;width:690.40px;height:459.50px;background:#f0f0fe"></div><div class="abs" style="left:11.00px;top:67.10px;width:667.70px;height:369.90px;background:#fff"></div><div class="abs" style="left:684.00px;top:69.00px;width:40.00px;height:365.00px;background:#fff"></div><span class="t " style="top:111.14px;font-size:7.63px;left:688.20px;transform:scaleX(0.9174);transform-origin:0 0;color:#222;white-space:pre;">Ды</span><span class="t " style="top:135.64px;font-size:7.63px;left:688.20px;transform:scaleX(0.9174);transform-origin:0 0;color:#222;white-space:pre;">ЭД</span><span class="t " style="top:159.14px;font-size:7.63px;left:688.20px;transform:scaleX(0.9174);transform-origin:0 0;color:#222;white-space:pre;"> М</span><span class="t " style="top:184.14px;font-size:7.63px;left:688.20px;transform:scaleX(0.9174);transform-origin:0 0;color:#222;white-space:pre;">ФГ</span><span class="t se i" style="top:72.45px;font-size:12px;left:14.50px;">Источник - буфер обмена</span><span class="t se i" style="top:96.95px;font-size:12px;left:14.50px;">2024/Новые с известным решением/25.03.23/ЮТА Негодяй</span><span class="t se i b" style="top:119.95px;font-size:12px;left:195.00px;width:300px;text-align:center;color:#2121ea;">Алгоритм Out_LIEr (Тест 1)</span><span class="t se i" style="top:150.55px;font-size:12px;left:195.00px;width:300px;text-align:center;color:#4fbb3c;">Диагностирована незначимость вер-ть - 95.8%</span><span class="t se i" style="top:164.67px;font-size:12.1px;left:195.00px;width:300px;text-align:center;color:#111;">(априорная вероятность - 0.5)</span><table class="rt" style="left:134.00px;top:193.60px;width:426.2px"><tr><td class="c" style="width:72.8px">N</td><td class="l" style="width:32.15px;background:#4b88f4">R1</td><td class="l" style="width:32.15px;background:#4b88f4">R2</td><td class="l" style="width:32.15px;background:#4b88f4">R3</td><td class="l" style="width:32.15px;background:#74f09c">R2</td><td class="l" style="width:32.15px;background:#74f09c">R3</td><td class="l" style="width:32.15px;background:#74f09c">R1</td><td class="l" style="width:32.15px;background:#f9ddb0">R1</td><td class="l" style="width:32.15px;background:#f9ddb0">R2</td><td class="l" style="width:32.15px;background:#f9ddb0">R3</td><td style="width:64px">Среднее</td></tr><tr><td class="l">Дыхание</td><td style="background:#7ef8fd">7.3</td><td style="background:#7ef8fd">-10.8</td><td style="background:#7ef8fd">-9.4</td><td style="background:#adf59b">-9.6</td><td style="background:#adf59b">-8.9</td><td style="background:#adf59b">7.8</td><td style="background:#fbfbd2">-12.5</td><td style="background:#fbfbd2">-12.0</td><td style="background:#fbfbd2">-13.1</td><td>-6.8</td></tr><tr><td class="l">ЭДА/КГР</td><td style="background:#7ef8fd">-1.8</td><td style="background:#7ef8fd">-9.5</td><td style="background:#7ef8fd">-9.6</td><td style="background:#adf59b">9.3</td><td style="background:#adf59b">-9.5</td><td style="background:#adf59b">-5.5</td><td style="background:#fbfbd2">4.3</td><td style="background:#fbfbd2">-8.1</td><td style="background:#fbfbd2">9.9</td><td>-2.3</td></tr><tr><td class="l">Манжета</td><td style="background:#7ef8fd">9.9</td><td style="background:#7ef8fd">11.0</td><td style="background:#7ef8fd">9.4</td><td style="background:#adf59b">9.6</td><td style="background:#adf59b">9.5</td><td style="background:#adf59b">9.6</td><td style="background:#fbfbd2">-8.9</td><td style="background:#fbfbd2">-9.5</td><td style="background:#fbfbd2">-9.5</td><td>3.46</td></tr><tr><td class="l">Плетизма</td><td style="background:#7ef8fd">10.4</td><td style="background:#7ef8fd">6.1</td><td style="background:#7ef8fd">-7.4</td><td style="background:#adf59b">16.1</td><td style="background:#adf59b">15.6</td><td style="background:#adf59b">15.1</td><td style="background:#fbfbd2">-8.2</td><td style="background:#fbfbd2">10.3</td><td style="background:#fbfbd2">7.9</td><td>7.3</td></tr><tr><td class="l">Среднее</td><td>6.4</td><td>-0.8</td><td>-4.2</td><td>6.3</td><td>1.7</td><td>6.8</td><td>-6.3</td><td>-4.8</td><td>-1.2</td><td></td></tr></table><span class="t se i" style="top:315.75px;font-size:12px;left:192.50px;width:300px;text-align:center;color:#111;">F = 0.43</span><table class="rt sm" style="left:294.00px;top:339.00px;width:104.00px"><tr><td class="l" style="width:33px">R1</td><td class="l" style="width:34.4px">R2</td><td class="l" style="width:36.6px">R3</td></tr><tr><td class="l">0.76</td><td class="l">0.08</td><td class="l">-0.41</td></tr></table><div class="pn" style="left:12px;top:437.0px;width:666.7px;height:82.6px;overflow:hidden;border-right:1.5px solid #6a6a6a"><div class="abs" style="left:0.00px;top:0.00px;width:666.70px;height:0.90px;background:#fff"></div><div class="gb" style="left:8.30px;top:3.30px;width:112.10px;height:46.50px;border-color:#f6cdb3"><b style="left:3.70px;width:45.50px"></b></div><span class="t " style="top:4.52px;font-size:8.72px;left:14.40px;transform:scaleX(0.9174);transform-origin:0 0;color:#111;">Алгоритмы</span><i class="rd" style="left:14.00px;top:19.30px"></i><span class="t " style="top:19.67px;font-size:9.37px;left:29.60px;transform:scaleX(0.9174);transform-origin:0 0;color:#111;">Cλ</span><i class="rd" style="left:44.60px;top:19.30px"></i><span class="t " style="top:19.67px;font-size:9.37px;left:59.20px;transform:scaleX(0.9174);transform-origin:0 0;color:#111;">Cλtt</span><i class="rd" style="left:80.30px;top:19.30px"></i><span class="t " style="top:19.67px;font-size:9.37px;left:94.30px;transform:scaleX(0.9174);transform-origin:0 0;color:#111;">CλT</span><i class="rd on" style="left:14.00px;top:34.20px"></i><span class="t " style="top:34.67px;font-size:9.37px;left:26.60px;transform:scaleX(0.9174);transform-origin:0 0;color:#111;">OL2</span><i class="rd" style="left:44.60px;top:34.20px"></i><span class="t " style="top:34.67px;font-size:9.37px;left:59.70px;transform:scaleX(0.9174);transform-origin:0 0;color:#111;">CλR</span><i class="rd" style="left:80.30px;top:34.20px"></i><span class="t " style="top:34.67px;font-size:9.37px;left:95.20px;transform:scaleX(0.9174);transform-origin:0 0;color:#111;">MO</span><div class="gb" style="left:127.80px;top:3.30px;width:46.50px;height:46.50px;border-color:#a9c6f7"></div><i class="rd on" style="left:131.00px;top:11.30px"></i><span class="t " style="top:12.12px;font-size:8.72px;left:145.40px;transform:scaleX(0.9174);transform-origin:0 0;color:#3a3af0;">Буфер</span><i class="rd" style="left:131.00px;top:32.40px"></i><span class="t " style="top:33.22px;font-size:8.72px;left:145.40px;transform:scaleX(0.9174);transform-origin:0 0;color:#3a3af0;">Файл</span><div class="gb" style="left:180.20px;top:3.30px;width:46.50px;height:46.50px;border-color:#f6cdb3"></div><i class="rd on" style="left:183.60px;top:11.30px"></i><span class="t " style="top:12.12px;font-size:8.72px;left:199.00px;transform:scaleX(0.9174);transform-origin:0 0;color:#e8642a;">ТВС</span><i class="rd" style="left:183.60px;top:32.40px"></i><span class="t " style="top:33.22px;font-size:8.72px;left:199.00px;transform:scaleX(0.9174);transform-origin:0 0;color:#e8642a;">МСИ</span><div class="gb" style="left:232.20px;top:3.30px;width:46.80px;height:46.50px;border-color:#a9c6f7"></div><i class="rd" style="left:235.90px;top:11.30px"></i><span class="t " style="top:12.12px;font-size:8.72px;left:251.00px;transform:scaleX(0.9174);transform-origin:0 0;color:#2f2fe8;">Лаб</span><i class="rd on" style="left:235.90px;top:32.40px"></i><span class="t " style="top:33.22px;font-size:8.72px;left:251.00px;transform:scaleX(0.9174);transform-origin:0 0;color:#2f2fe8;">УгД</span><div class="gb" style="left:284.60px;top:3.30px;width:64.70px;height:46.50px;border-color:#f6cdb3"></div><i class="rd" style="left:291.80px;top:11.30px"></i><span class="t " style="top:11.57px;font-size:9.37px;left:306.00px;transform:scaleX(0.9174);transform-origin:0 0;color:#111;">v1</span><i class="rd on" style="left:291.80px;top:32.40px"></i><span class="t " style="top:32.67px;font-size:9.37px;left:306.00px;transform:scaleX(0.9174);transform-origin:0 0;color:#111;">v2</span><div class="tb cc" style="left:322.00px;top:17.80px"><svg width="19" height="19" viewBox="0 0 19 19"><circle cx="9.6" cy="9.2" r="5.8" fill="#8fb4ee"/><text x="9.6" y="11.3" font-size="6.4" font-weight="700" fill="#e9f0fd" text-anchor="middle" font-family='"Liberation Sans",sans-serif'>cc</text></svg></div><span class="t " style="top:55.42px;font-size:7.3px;left:8.30px;transform:scaleX(0.9174);transform-origin:0 0;color:#111;">Спазм Т</span><span class="t " style="top:67.12px;font-size:7.3px;left:8.30px;transform:scaleX(0.9174);transform-origin:0 0;color:#111;">Спазм Д</span><div class="cb dis" style="left:45.40px;top:53.10px;width:9.40px;height:9.20px;"></div><div class="cb dis" style="left:45.40px;top:65.00px;width:9.40px;height:9.20px;"></div><div class="cmb" style="left:65.00px;top:53.80px;width:106.8px;height:21px"><span class="t" style="left:2.2px;top:5.8px;font-size:9.2px;color:#111">Триумф</span><i></i></div><div class="gb" style="left:177.50px;top:53.80px;width:172.50px;height:25.80px;border-color:#6fc24f"><b style="left:4.30px;width:66.60px"></b></div><span class="t " style="top:54.02px;font-size:8.72px;left:189.80px;transform:scaleX(0.9174);transform-origin:0 0;color:#111;">Выбор канала</span><i class="rd" style="left:191.70px;top:66.00px"></i><span class="t se b" style="top:68.50px;font-size:6.8px;left:205.90px;color:#111;">ПГ</span><i class="rd" style="left:229.00px;top:66.00px"></i><span class="t se b" style="top:68.50px;font-size:6.8px;left:244.00px;color:#111;">АД</span><i class="rd on" style="left:266.60px;top:66.00px"></i><span class="t " style="top:65.97px;font-size:10.9px;left:281.40px;transform:scaleX(0.9174);transform-origin:0 0;color:#111;">+</span><div class="cb chk" style="left:304.00px;top:66.00px;width:8.6px;height:8.6px"><svg width="9" height="9" viewBox="0 0 9 9"><path d="M1.6 4.6l2 2.2 3.8-5" fill="none" stroke="#222" stroke-width="1"/></svg></div><span class="t " style="top:66.92px;font-size:8.72px;left:319.00px;transform:scaleX(0.9174);transform-origin:0 0;color:#111;">Дых</span><div class="tb" style="left:359.30px;top:8.50px"><svg width="19" height="19" viewBox="0 0 19 19"><circle cx="9.8" cy="10" r="6" fill="#c9241b"/><circle cx="8.6" cy="8.4" r="3" fill="#d8453b" opacity="0.6"/><text x="9.9" y="12.2" font-size="6" font-weight="700" fill="#fff" text-anchor="middle" font-family='"Liberation Sans",sans-serif'>R</text></svg></div><div class="tb" style="left:381.80px;top:8.50px"><svg width="19" height="19" viewBox="0 0 19 19"><g fill="#e9f1fd" stroke="#a3c1f0" stroke-width="0.9"><path d="M5.8 6v7.6c0 1.1 1.8 1.8 4 1.8s4-0.7 4-1.8V6"/><ellipse cx="9.8" cy="6" rx="4" ry="1.7"/><path d="M5.8 8.6c0 1.1 1.8 1.8 4 1.8s4-0.7 4-1.8M5.8 11.2c0 1.1 1.8 1.8 4 1.8s4-0.7 4-1.8" fill="none"/></g><circle cx="13.4" cy="13.6" r="2.2" fill="#6d9fea"/><circle cx="13.4" cy="13.6" r="0.8" fill="#fff"/></svg></div><div class="tb" style="left:404.30px;top:8.50px"><svg width="19" height="19" viewBox="0 0 19 19"><text x="12.2" y="16.6" font-size="17.5" fill="#e3242b" stroke="#e3242b" stroke-width="0.35" text-anchor="middle" transform="scale(0.78,1)" font-family='"Liberation Sans","DejaVu Sans",sans-serif'>Σ</text></svg></div><div class="tb" style="left:359.30px;top:30.80px"><svg width="19" height="19" viewBox="0 0 19 19"><g fill="#fdfdff" stroke="#c6d0e2" stroke-width="0.9"><path d="M7.8 4.8h4.8l2.4 2.4v7h-7.2z"/><path d="M4.6 6.8h4.8l2.4 2.4v7h-7.2z"/></g></svg></div><div class="tb" style="left:381.80px;top:30.80px"><svg width="19" height="19" viewBox="0 0 19 19"><path d="M5.6 4.4h5.6l2.8 2.8v9h-8.4z" fill="#f0632c"/><path d="M11.2 4.4v2.8h2.8z" fill="#f9b79c"/><path d="M7 14.2c2-0.6 3-2.4 2.8-5.2c0.6 2.6 1.6 3.6 3.4 3.8c-2.4-0.2-4.4 0.4-6.2 1.4z" fill="none" stroke="#fff" stroke-width="0.8"/></svg></div><div class="tb" style="left:404.30px;top:30.80px"><svg width="19" height="19" viewBox="0 0 19 19"><text x="9.7" y="16.3" font-size="18" font-weight="700" fill="#8cc63f" text-anchor="middle" font-family='"Liberation Serif","DejaVu Serif",serif'>H</text></svg></div><div class="tb" style="left:359.30px;top:53.10px"><svg width="19" height="19" viewBox="0 0 19 19"><path d="M5.2 4.6h5l2.8 2.8v8.4h-7.8z" fill="#f7faf7" stroke="#cddccf" stroke-width="1"/><path d="M10.2 4.6v2.8h2.8" fill="none" stroke="#cddccf" stroke-width="0.9"/><path d="M6.8 9.4l3 3.6M9.8 9.4l-3 3.6" stroke="#9fc5a6" stroke-width="0.9"/><path d="M12.6 11.4v3.2M10.8 13.4l1.8 2.2 1.8-2.2z" stroke="#8b9099" fill="#8b9099" stroke-width="0.9"/></svg></div><div class="tb" style="left:381.80px;top:53.10px"><svg width="19" height="19" viewBox="0 0 19 19"><circle cx="9.8" cy="9.8" r="6" fill="#8db0ec"/><rect x="9.1" y="8.6" width="1.5" height="4.6" fill="#fff"/><circle cx="9.85" cy="6.8" r="0.95" fill="#fff"/></svg></div><span class="t se i b" style="top:10.93px;font-size:8.8px;left:434.30px;color:#111;">МТТ</span><div class="cb" style="left:455.40px;top:10.20px;width:9.50px;height:9.30px;"></div><span class="t se i b" style="top:22.03px;font-size:8.8px;left:434.30px;color:#111;">ПД</span><div class="cb" style="left:455.40px;top:21.40px;width:9.50px;height:9.30px;"></div><span class="t se i b" style="top:33.13px;font-size:8.8px;left:434.30px;color:#111;">СБ</span><div class="cb" style="left:455.40px;top:32.60px;width:9.50px;height:9.30px;"></div><span class="t " style="top:11.10px;font-size:9.81px;left:479.00px;transform:scaleX(0.9174);transform-origin:0 0;color:#222;">+/-</span><div class="spn" style="left:474.00px;top:28.80px"><span class="t" style="left:1.6px;top:13.2px;font-size:12.4px;color:#111">3</span><em style="top:0.6px"><svg width="9" height="15" viewBox="0 0 9 15"><path d="M2.6 9l1.9-2.4 1.9 2.4z" fill="#111"/></svg></em><em style="top:17.6px"><svg width="9" height="15" viewBox="0 0 9 15"><path d="M2.6 6l1.9 2.4 1.9-2.4z" fill="#111"/></svg></em></div><div class="gb" style="left:516.00px;top:3.30px;width:83.00px;height:74.30px;border-color:#6fc24f"><b style="left:3.50px;width:24.50px"></b></div><span class="t " style="top:3.97px;font-size:9.37px;left:522.60px;transform:scaleX(0.9174);transform-origin:0 0;color:#111;">Тесты</span><div class="tt sel en" style="left:521.40px;top:19.90px">1</div><div class="tt en" style="left:546.00px;top:19.90px">2</div><div class="tt en" style="left:570.60px;top:19.90px">3</div><div class="tt" style="left:521.40px;top:32.05px">4</div><div class="tt" style="left:546.00px;top:32.05px">5</div><div class="tt" style="left:570.60px;top:32.05px">6</div><div class="tt" style="left:521.40px;top:44.20px">7</div><div class="tt" style="left:546.00px;top:44.20px">8</div><div class="tt" style="left:570.60px;top:44.20px">9</div><div class="tt" style="left:546.00px;top:56.35px">10</div><span class="t i" style="top:10.84px;font-size:7.63px;left:614.20px;transform:scaleX(0.9174);transform-origin:0 0;color:#222;">Априорная веро</span><span class="t i" style="top:25.84px;font-size:7.63px;left:614.20px;transform:scaleX(0.9174);transform-origin:0 0;color:#222;">Получать апост</span><span class="t i" style="top:41.54px;font-size:7.63px;left:614.20px;transform:scaleX(0.9174);transform-origin:0 0;color:#222;">Вероятность ар</span><span class="t i" style="top:52.04px;font-size:7.63px;left:614.20px;transform:scaleX(0.9174);transform-origin:0 0;color:#222;">Предупреждени</span><span class="t i" style="top:67.74px;font-size:7.63px;left:614.20px;transform:scaleX(0.9174);transform-origin:0 0;color:#222;">Показывать гис</span></div><div class="abs" style="left:11.50px;top:518.20px;width:667.20px;height:1.70px;background:#6a6a6a"></div><div class="abs" style="left:0.00px;top:533.80px;width:695.00px;height:22.90px;background:#e6e8fb"></div><svg class="ic" style="left:0.5px;top:536.30px" width="3" height="15" viewBox="0 0 3 15"><path d="M1.2 0v15" stroke="#b9bdd6" stroke-width="1.2" stroke-dasharray="1.2 1.6"/></svg><svg class="ic" style="left:10px;top:539.00px" width="9" height="10" viewBox="0 0 9 10"><rect width="8.4" height="10" rx="0.6" fill="#f8ec1c"/><path d="M1.6 5h4" stroke="#3cb043" stroke-width="1.2" fill="none"/><path d="M4.6 2.8l2.8 2.2-2.8 2.2z" fill="#3cb043"/></svg><svg class="ic" style="left:29.5px;top:539.00px" width="8" height="10" viewBox="0 0 8 10"><rect x="0.6" y="0.3" width="6.6" height="9.4" rx="0.6" fill="#5f8fdd"/><rect x="1.6" y="3" width="4.2" height="5.6" fill="#7aa4e8"/><rect x="4.6" y="1.2" width="1.8" height="1.4" fill="#f2a68a"/></svg><svg class="ic" style="left:47px;top:539.00px" width="10" height="10" viewBox="0 0 10 10"><rect x="0.6" y="0.6" width="8.8" height="8.4" rx="1.6" fill="#f4ece8" stroke="#dda284" stroke-width="1"/><rect x="2.4" y="3" width="5.2" height="2.2" rx="0.6" fill="none" stroke="#dda284" stroke-width="0.8"/><path d="M1 7.2h8" stroke="#dda284" stroke-width="0.8"/></svg><div class="abs" style="left:63.00px;top:537.30px;width:1.00px;height:13.00px;background:#c9cce4"></div><svg class="ic" style="left:69px;top:538.00px" width="11" height="12" viewBox="0 0 11 12"><path d="M0.8 2.6 L6.4 0.8 L9.8 7.4 L6.8 11 L3 10.2 Z" fill="#ecd95a" stroke="#3f3a18" stroke-width="0.9"/><path d="M3.4 1.4l2-0.8" stroke="#3f3a18" stroke-width="1.2"/><path d="M3.2 4l3.2-1M4 6l3.2-1" stroke="#a89a38" stroke-width="0.6"/></svg><svg class="ic" style="left:88px;top:539.00px" width="12" height="10" viewBox="0 0 12 10"><path d="M0.6 1.4h4l1 1.4h5.6v6.6h-10.6z" fill="#d5e5fb" stroke="#8fb6ee" stroke-width="0.9"/></svg><div class="abs" style="left:104.50px;top:537.30px;width:1.00px;height:13.00px;background:#c9cce4"></div><svg class="ic" style="left:111.5px;top:538.00px" width="10" height="12" viewBox="0 0 10 12"><rect x="0" y="0.5" width="10" height="11.5" fill="#f2f2f2"/><circle cx="5" cy="2.6" r="1.4" fill="none" stroke="#444" stroke-width="0.9"/><path d="M3.6 3.8 L6.4 3.8 C8.6 5.4 9.6 7.6 8.8 9.4 Q5 11.4 1.2 9.4 C0.4 7.6 1.4 5.4 3.6 3.8 Z" fill="#4c4c4c"/><ellipse cx="5" cy="9.6" rx="3.6" ry="0.9" fill="#777"/></svg><div class="abs" style="left:128.00px;top:537.30px;width:1.00px;height:13.00px;background:#c9cce4"></div><svg class="ic" style="left:134.5px;top:538.50px" width="12" height="11" viewBox="0 0 12 11"><path d="M0.2 10.4 L0.6 8.6 L2.2 7 C2.8 4.4 5.2 2.4 8.4 1.8 L11.9 0.1 L11.5 2.1 L9.8 2.9 L11.4 3 L10.8 4.7 L8.8 5.2 L10.4 5.6 L9.4 7.2 L6.6 7.6 L7.8 8.3 C6.2 9.6 4.2 9.8 3 9.4 L1.4 10.6 Z" fill="#111"/><path d="M4.6 6.2 L9.6 3.2 M4.8 7.6 L9.2 5.6 M4.4 8.8 L7.4 8" stroke="#fff" stroke-width="0.55" fill="none"/></svg></div>
<div style="position:absolute;left:578.3px;top:522.4px;width:726.5px;height:601.6px;background:#fff"></div><div style="position:absolute;left:578.3px;top:523px;width:1.3px;height:589px;background:#1a1a1a"></div><div class="win" style="left:579.69px;top:524.7px;width:686.3px;height:555.7px;transform:scale(1.0565);"><div class="abs" style="left:0.00px;top:21.00px;width:3.80px;height:16.00px;background:#e6e8fb"></div><div class="abs" style="left:0.00px;top:37.00px;width:3.80px;height:497.30px;background:#fefef2"></div><div class="abs" style="left:0.00px;top:534.30px;width:3.80px;height:21.40px;background:#e6e8fb"></div><div style="left:2.8px;top:0;width:683.5px;height:555.7px"><svg class="ic" style="left:3.5px;top:3.3px" width="12" height="11" viewBox="0 0 12 11"><path d="M0.2 10.4 L0.6 8.6 L2.2 7 C2.8 4.4 5.2 2.4 8.4 1.8 L11.9 0.1 L11.5 2.1 L9.8 2.9 L11.4 3 L10.8 4.7 L8.8 5.2 L10.4 5.6 L9.4 7.2 L6.6 7.6 L7.8 8.3 C6.2 9.6 4.2 9.8 3 9.4 L1.4 10.6 Z" fill="#111"/><path d="M4.6 6.2 L9.6 3.2 M4.8 7.6 L9.2 5.6 M4.4 8.8 L7.4 8" stroke="#fff" stroke-width="0.55" fill="none"/></svg><span class="t " style="top:4.40px;font-size:9.81px;left:19.60px;transform:scaleX(0.9174);transform-origin:0 0;color:#8a8a8a;">СППРП "Сокоλ"</span><div class="abs" style="left:0.00px;top:21.00px;width:683.50px;height:16.00px;background:#e6e8fb"></div><svg class="ic" style="left:4.6px;top:23.6px" width="11" height="10" viewBox="0 0 11 10"><rect x="0.6" y="0.2" width="8" height="6.4" fill="#98b6f0"/><path d="M2.6 1.6v3.2M4.6 1.2v4M6.6 1.6v3.2M2 3.2h5.2" stroke="#5a88e3" stroke-width="0.8" fill="none"/><rect x="0.6" y="6.4" width="9.8" height="2.2" fill="#cbd9f8"/><circle cx="1.5" cy="8" r="1.25" fill="#3f74dc"/></svg><svg class="ic" style="left:28px;top:22px" width="12" height="13" viewBox="0 0 12 13"><rect x="0.9" y="0.5" width="7.6" height="9" rx="0.9" fill="#6b9ceb"/><rect x="2" y="1.7" width="5.4" height="1.5" fill="#dfe9fb"/><path d="M2 4.5h5.4M2 6.1h5.4M2 7.7h3.4" stroke="#dfe9fb" stroke-width="0.9"/><path d="M3.75 4v4.4M5.6 4v4.4" stroke="#6b9ceb" stroke-width="0.7"/><path d="M6.6 7.4h1l0.4-0.8h0.9l0.4 0.8h0.9c0.9 0 1.3 0.6 1.3 1.4v1.6c0 1.4-1 2.3-2.5 2.3s-2.8-0.9-2.8-2.3z" fill="#3f80e4"/></svg><svg class="ic" style="left:51.6px;top:22.8px" width="12" height="12" viewBox="0 0 12 12"><g fill="#4285e4"><circle cx="6" cy="6" r="4.2"/><rect x="4.7" y="0.3" width="2.6" height="11.4" rx="0.5" transform="rotate(0 6 6)"/><rect x="4.7" y="0.3" width="2.6" height="11.4" rx="0.5" transform="rotate(45 6 6)"/><rect x="4.7" y="0.3" width="2.6" height="11.4" rx="0.5" transform="rotate(90 6 6)"/><rect x="4.7" y="0.3" width="2.6" height="11.4" rx="0.5" transform="rotate(135 6 6)"/></g><circle cx="6" cy="6" r="1.8" fill="#eef1fd"/></svg><svg class="ic" style="left:76.6px;top:24.4px" width="9" height="9" viewBox="0 0 9 9"><rect x="0.4" y="0.4" width="8" height="8" rx="1.5" fill="#5d94e8" stroke="#3f7ade" stroke-width="0.9"/><rect x="4" y="2.4" width="0.9" height="4" fill="#b9d0f6"/></svg><div class="abs" style="left:0.00px;top:37.00px;width:683.50px;height:497.30px;background:#fefef2"></div><div class="abs" style="left:11.00px;top:64.70px;width:672.50px;height:1.35px;background:#555"></div><div class="abs" style="left:118.20px;top:48.40px;width:1.10px;height:17.00px;background:#6c6c6c"></div><span class="t " style="top:53.52px;font-size:8.72px;left:-84.85px;width:300px;text-align:center;transform:scaleX(0.9174);transform-origin:50% 0;color:#4444f4;white-space:pre;">1 ТВС  буфер обмен..</span><span class="t " style="top:53.52px;font-size:8.72px;left:23.45px;width:300px;text-align:center;transform:scaleX(0.9174);transform-origin:50% 0;color:#4444f4;white-space:pre;">2 ТВС  буфер обмен..</span><div class="abs" style="left:227.60px;top:48.40px;width:107.80px;height:18.00px;background:#fffffb;border-top:1.6px solid #555;border-left:1.6px solid #555;box-sizing:border-box"></div><span class="t " style="top:53.52px;font-size:8.72px;left:131.75px;width:300px;text-align:center;transform:scaleX(0.9174);transform-origin:50% 0;color:#111;white-space:pre;">Тест 3</span><div class="abs" style="left:443.10px;top:48.40px;width:1.10px;height:17.00px;background:#6c6c6c"></div><span class="t " style="top:53.52px;font-size:8.72px;left:240.05px;width:300px;text-align:center;transform:scaleX(0.9174);transform-origin:50% 0;color:#8a8a8a;white-space:pre;">Тест 4</span><div class="abs" style="left:551.40px;top:48.40px;width:1.10px;height:17.00px;background:#6c6c6c"></div><span class="t " style="top:53.52px;font-size:8.72px;left:348.35px;width:300px;text-align:center;transform:scaleX(0.9174);transform-origin:50% 0;color:#8a8a8a;white-space:pre;">Тест 5</span><div class="abs" style="left:659.70px;top:48.40px;width:1.10px;height:17.00px;background:#6c6c6c"></div><span class="t " style="top:53.52px;font-size:8.72px;left:456.65px;width:300px;text-align:center;transform:scaleX(0.9174);transform-origin:50% 0;color:#8a8a8a;white-space:pre;">Тест 6</span><div class="abs" style="left:4.60px;top:66.20px;width:678.90px;height:460.34px;background:#f0f0fe"></div><div class="abs" style="left:11.00px;top:67.10px;width:667.70px;height:370.14px;background:#fff"></div><div class="pn" style="left:12px;top:437.2400000000001px;width:666.7px;height:82.6px;overflow:hidden;border-right:1.5px solid #6a6a6a"><div class="abs" style="left:0.00px;top:0.00px;width:666.70px;height:0.90px;background:#fff"></div><div class="gb" style="left:8.30px;top:3.30px;width:112.10px;height:46.50px;border-color:#f6cdb3"><b style="left:3.70px;width:45.50px"></b></div><span class="t " style="top:4.52px;font-size:8.72px;left:14.40px;transform:scaleX(0.9174);transform-origin:0 0;color:#111;">Алгоритмы</span><i class="rd" style="left:14.00px;top:19.30px"></i><span class="t " style="top:19.67px;font-size:9.37px;left:29.60px;transform:scaleX(0.9174);transform-origin:0 0;color:#111;">Cλ</span><i class="rd" style="left:44.60px;top:19.30px"></i><span class="t " style="top:19.67px;font-size:9.37px;left:59.20px;transform:scaleX(0.9174);transform-origin:0 0;color:#111;">Cλtt</span><i class="rd" style="left:80.30px;top:19.30px"></i><span class="t " style="top:19.67px;font-size:9.37px;left:94.30px;transform:scaleX(0.9174);transform-origin:0 0;color:#111;">CλT</span><i class="rd on" style="left:14.00px;top:34.20px"></i><span class="t " style="top:34.67px;font-size:9.37px;left:26.60px;transform:scaleX(0.9174);transform-origin:0 0;color:#111;">OL2</span><i class="rd" style="left:44.60px;top:34.20px"></i><span class="t " style="top:34.67px;font-size:9.37px;left:59.70px;transform:scaleX(0.9174);transform-origin:0 0;color:#111;">CλR</span><i class="rd" style="left:80.30px;top:34.20px"></i><span class="t " style="top:34.67px;font-size:9.37px;left:95.20px;transform:scaleX(0.9174);transform-origin:0 0;color:#111;">MO</span><div class="gb" style="left:127.80px;top:3.30px;width:46.50px;height:46.50px;border-color:#a9c6f7"></div><i class="rd on" style="left:131.00px;top:11.30px"></i><span class="t " style="top:12.12px;font-size:8.72px;left:145.40px;transform:scaleX(0.9174);transform-origin:0 0;color:#3a3af0;">Буфер</span><i class="rd" style="left:131.00px;top:32.40px"></i><span class="t " style="top:33.22px;font-size:8.72px;left:145.40px;transform:scaleX(0.9174);transform-origin:0 0;color:#3a3af0;">Файл</span><div class="gb" style="left:180.20px;top:3.30px;width:46.50px;height:46.50px;border-color:#f6cdb3"></div><i class="rd on" style="left:183.60px;top:11.30px"></i><span class="t " style="top:12.12px;font-size:8.72px;left:199.00px;transform:scaleX(0.9174);transform-origin:0 0;color:#e8642a;">ТВС</span><i class="rd" style="left:183.60px;top:32.40px"></i><span class="t " style="top:33.22px;font-size:8.72px;left:199.00px;transform:scaleX(0.9174);transform-origin:0 0;color:#e8642a;">МСИ</span><div class="gb" style="left:232.20px;top:3.30px;width:46.80px;height:46.50px;border-color:#a9c6f7"></div><i class="rd" style="left:235.90px;top:11.30px"></i><span class="t " style="top:12.12px;font-size:8.72px;left:251.00px;transform:scaleX(0.9174);transform-origin:0 0;color:#2f2fe8;">Лаб</span><i class="rd on" style="left:235.90px;top:32.40px"></i><span class="t " style="top:33.22px;font-size:8.72px;left:251.00px;transform:scaleX(0.9174);transform-origin:0 0;color:#2f2fe8;">УгД</span><div class="gb" style="left:284.60px;top:3.30px;width:64.70px;height:46.50px;border-color:#f6cdb3"></div><i class="rd" style="left:291.80px;top:11.30px"></i><span class="t " style="top:11.57px;font-size:9.37px;left:306.00px;transform:scaleX(0.9174);transform-origin:0 0;color:#111;">v1</span><i class="rd on" style="left:291.80px;top:32.40px"></i><span class="t " style="top:32.67px;font-size:9.37px;left:306.00px;transform:scaleX(0.9174);transform-origin:0 0;color:#111;">v2</span><div class="tb cc" style="left:322.00px;top:17.80px"><svg width="19" height="19" viewBox="0 0 19 19"><circle cx="9.6" cy="9.2" r="5.8" fill="#8fb4ee"/><text x="9.6" y="11.3" font-size="6.4" font-weight="700" fill="#e9f0fd" text-anchor="middle" font-family='"Liberation Sans",sans-serif'>cc</text></svg></div><span class="t " style="top:55.42px;font-size:7.3px;left:8.30px;transform:scaleX(0.9174);transform-origin:0 0;color:#111;">Спазм Т</span><span class="t " style="top:67.12px;font-size:7.3px;left:8.30px;transform:scaleX(0.9174);transform-origin:0 0;color:#111;">Спазм Д</span><div class="cb dis" style="left:45.40px;top:53.10px;width:9.40px;height:9.20px;"></div><div class="cb dis" style="left:45.40px;top:65.00px;width:9.40px;height:9.20px;"></div><div class="cmb" style="left:65.00px;top:53.80px;width:106.8px;height:21px"><span class="t" style="left:2.2px;top:5.8px;font-size:9.2px;color:#111">Триумф</span><i></i></div><div class="gb" style="left:177.50px;top:53.80px;width:172.50px;height:25.80px;border-color:#6fc24f"><b style="left:4.30px;width:66.60px"></b></div><span class="t " style="top:54.02px;font-size:8.72px;left:189.80px;transform:scaleX(0.9174);transform-origin:0 0;color:#111;">Выбор канала</span><i class="rd" style="left:191.70px;top:66.00px"></i><span class="t se b" style="top:68.50px;font-size:6.8px;left:205.90px;color:#111;">ПГ</span><i class="rd" style="left:229.00px;top:66.00px"></i><span class="t se b" style="top:68.50px;font-size:6.8px;left:244.00px;color:#111;">АД</span><i class="rd on" style="left:266.60px;top:66.00px"></i><span class="t " style="top:65.97px;font-size:10.9px;left:281.40px;transform:scaleX(0.9174);transform-origin:0 0;color:#111;">+</span><div class="cb chk" style="left:304.00px;top:66.00px;width:8.6px;height:8.6px"><svg width="9" height="9" viewBox="0 0 9 9"><path d="M1.6 4.6l2 2.2 3.8-5" fill="none" stroke="#222" stroke-width="1"/></svg></div><span class="t " style="top:66.92px;font-size:8.72px;left:319.00px;transform:scaleX(0.9174);transform-origin:0 0;color:#111;">Дых</span><div class="tb" style="left:359.30px;top:8.50px"><svg width="19" height="19" viewBox="0 0 19 19"><circle cx="9.8" cy="10" r="6" fill="#c9241b"/><circle cx="8.6" cy="8.4" r="3" fill="#d8453b" opacity="0.6"/><text x="9.9" y="12.2" font-size="6" font-weight="700" fill="#fff" text-anchor="middle" font-family='"Liberation Sans",sans-serif'>R</text></svg></div><div class="tb" style="left:381.80px;top:8.50px"><svg width="19" height="19" viewBox="0 0 19 19"><g fill="#e9f1fd" stroke="#a3c1f0" stroke-width="0.9"><path d="M5.8 6v7.6c0 1.1 1.8 1.8 4 1.8s4-0.7 4-1.8V6"/><ellipse cx="9.8" cy="6" rx="4" ry="1.7"/><path d="M5.8 8.6c0 1.1 1.8 1.8 4 1.8s4-0.7 4-1.8M5.8 11.2c0 1.1 1.8 1.8 4 1.8s4-0.7 4-1.8" fill="none"/></g><circle cx="13.4" cy="13.6" r="2.2" fill="#6d9fea"/><circle cx="13.4" cy="13.6" r="0.8" fill="#fff"/></svg></div><div class="tb" style="left:404.30px;top:8.50px"><svg width="19" height="19" viewBox="0 0 19 19"><text x="12.2" y="16.6" font-size="17.5" fill="#e3242b" stroke="#e3242b" stroke-width="0.35" text-anchor="middle" transform="scale(0.78,1)" font-family='"Liberation Sans","DejaVu Sans",sans-serif'>Σ</text></svg></div><div class="tb" style="left:359.30px;top:30.80px"><svg width="19" height="19" viewBox="0 0 19 19"><g fill="#fdfdff" stroke="#c6d0e2" stroke-width="0.9"><path d="M7.8 4.8h4.8l2.4 2.4v7h-7.2z"/><path d="M4.6 6.8h4.8l2.4 2.4v7h-7.2z"/></g></svg></div><div class="tb" style="left:381.80px;top:30.80px"><svg width="19" height="19" viewBox="0 0 19 19"><path d="M5.6 4.4h5.6l2.8 2.8v9h-8.4z" fill="#f0632c"/><path d="M11.2 4.4v2.8h2.8z" fill="#f9b79c"/><path d="M7 14.2c2-0.6 3-2.4 2.8-5.2c0.6 2.6 1.6 3.6 3.4 3.8c-2.4-0.2-4.4 0.4-6.2 1.4z" fill="none" stroke="#fff" stroke-width="0.8"/></svg></div><div class="tb" style="left:404.30px;top:30.80px"><svg width="19" height="19" viewBox="0 0 19 19"><text x="9.7" y="16.3" font-size="18" font-weight="700" fill="#8cc63f" text-anchor="middle" font-family='"Liberation Serif","DejaVu Serif",serif'>H</text></svg></div><div class="tb" style="left:359.30px;top:53.10px"><svg width="19" height="19" viewBox="0 0 19 19"><path d="M5.2 4.6h5l2.8 2.8v8.4h-7.8z" fill="#f7faf7" stroke="#cddccf" stroke-width="1"/><path d="M10.2 4.6v2.8h2.8" fill="none" stroke="#cddccf" stroke-width="0.9"/><path d="M6.8 9.4l3 3.6M9.8 9.4l-3 3.6" stroke="#9fc5a6" stroke-width="0.9"/><path d="M12.6 11.4v3.2M10.8 13.4l1.8 2.2 1.8-2.2z" stroke="#8b9099" fill="#8b9099" stroke-width="0.9"/></svg></div><div class="tb" style="left:381.80px;top:53.10px"><svg width="19" height="19" viewBox="0 0 19 19"><circle cx="9.8" cy="9.8" r="6" fill="#8db0ec"/><rect x="9.1" y="8.6" width="1.5" height="4.6" fill="#fff"/><circle cx="9.85" cy="6.8" r="0.95" fill="#fff"/></svg></div><span class="t se i b" style="top:10.93px;font-size:8.8px;left:434.30px;color:#111;">МТТ</span><div class="cb" style="left:455.40px;top:10.20px;width:9.50px;height:9.30px;"></div><span class="t se i b" style="top:22.03px;font-size:8.8px;left:434.30px;color:#111;">ПД</span><div class="cb" style="left:455.40px;top:21.40px;width:9.50px;height:9.30px;"></div><span class="t se i b" style="top:33.13px;font-size:8.8px;left:434.30px;color:#111;">СБ</span><div class="cb" style="left:455.40px;top:32.60px;width:9.50px;height:9.30px;"></div><span class="t " style="top:11.10px;font-size:9.81px;left:479.00px;transform:scaleX(0.9174);transform-origin:0 0;color:#222;">+/-</span><div class="spn" style="left:474.00px;top:28.80px"><span class="t" style="left:1.6px;top:13.2px;font-size:12.4px;color:#111">3</span><em style="top:0.6px"><svg width="9" height="15" viewBox="0 0 9 15"><path d="M2.6 9l1.9-2.4 1.9 2.4z" fill="#111"/></svg></em><em style="top:17.6px"><svg width="9" height="15" viewBox="0 0 9 15"><path d="M2.6 6l1.9 2.4 1.9-2.4z" fill="#111"/></svg></em></div><div class="gb" style="left:516.00px;top:3.30px;width:83.00px;height:74.30px;border-color:#6fc24f"><b style="left:3.50px;width:24.50px"></b></div><span class="t " style="top:3.97px;font-size:9.37px;left:522.60px;transform:scaleX(0.9174);transform-origin:0 0;color:#111;">Тесты</span><div class="tt en" style="left:521.40px;top:19.90px">1</div><div class="tt en" style="left:546.00px;top:19.90px">2</div><div class="tt sel en" style="left:570.60px;top:19.90px">3</div><div class="tt" style="left:521.40px;top:32.05px">4</div><div class="tt" style="left:546.00px;top:32.05px">5</div><div class="tt" style="left:570.60px;top:32.05px">6</div><div class="tt" style="left:521.40px;top:44.20px">7</div><div class="tt" style="left:546.00px;top:44.20px">8</div><div class="tt" style="left:570.60px;top:44.20px">9</div><div class="tt" style="left:546.00px;top:56.35px">10</div><span class="t i" style="top:10.84px;font-size:7.63px;left:614.20px;transform:scaleX(0.9174);transform-origin:0 0;color:#222;">Априорная веро</span><span class="t i" style="top:25.84px;font-size:7.63px;left:614.20px;transform:scaleX(0.9174);transform-origin:0 0;color:#222;">Получать апост</span><span class="t i" style="top:41.54px;font-size:7.63px;left:614.20px;transform:scaleX(0.9174);transform-origin:0 0;color:#222;">Вероятность ар</span><span class="t i" style="top:52.04px;font-size:7.63px;left:614.20px;transform:scaleX(0.9174);transform-origin:0 0;color:#222;">Предупреждени</span><span class="t i" style="top:67.74px;font-size:7.63px;left:614.20px;transform:scaleX(0.9174);transform-origin:0 0;color:#222;">Показывать гис</span></div><div class="abs" style="left:11.50px;top:518.44px;width:667.20px;height:1.70px;background:#6a6a6a"></div><div class="abs" style="left:0.00px;top:534.30px;width:683.50px;height:21.40px;background:#e6e8fb"></div><svg class="ic" style="left:0.5px;top:536.05px" width="3" height="15" viewBox="0 0 3 15"><path d="M1.2 0v15" stroke="#b9bdd6" stroke-width="1.2" stroke-dasharray="1.2 1.6"/></svg><svg class="ic" style="left:10px;top:538.75px" width="9" height="10" viewBox="0 0 9 10"><rect width="8.4" height="10" rx="0.6" fill="#f8ec1c"/><path d="M1.6 5h4" stroke="#3cb043" stroke-width="1.2" fill="none"/><path d="M4.6 2.8l2.8 2.2-2.8 2.2z" fill="#3cb043"/></svg><svg class="ic" style="left:29.5px;top:538.75px" width="8" height="10" viewBox="0 0 8 10"><rect x="0.6" y="0.3" width="6.6" height="9.4" rx="0.6" fill="#5f8fdd"/><rect x="1.6" y="3" width="4.2" height="5.6" fill="#7aa4e8"/><rect x="4.6" y="1.2" width="1.8" height="1.4" fill="#f2a68a"/></svg><svg class="ic" style="left:47px;top:538.75px" width="10" height="10" viewBox="0 0 10 10"><rect x="0.6" y="0.6" width="8.8" height="8.4" rx="1.6" fill="#f4ece8" stroke="#dda284" stroke-width="1"/><rect x="2.4" y="3" width="5.2" height="2.2" rx="0.6" fill="none" stroke="#dda284" stroke-width="0.8"/><path d="M1 7.2h8" stroke="#dda284" stroke-width="0.8"/></svg><div class="abs" style="left:63.00px;top:537.05px;width:1.00px;height:13.00px;background:#c9cce4"></div><svg class="ic" style="left:69px;top:537.75px" width="11" height="12" viewBox="0 0 11 12"><path d="M0.8 2.6 L6.4 0.8 L9.8 7.4 L6.8 11 L3 10.2 Z" fill="#ecd95a" stroke="#3f3a18" stroke-width="0.9"/><path d="M3.4 1.4l2-0.8" stroke="#3f3a18" stroke-width="1.2"/><path d="M3.2 4l3.2-1M4 6l3.2-1" stroke="#a89a38" stroke-width="0.6"/></svg><svg class="ic" style="left:88px;top:538.75px" width="12" height="10" viewBox="0 0 12 10"><path d="M0.6 1.4h4l1 1.4h5.6v6.6h-10.6z" fill="#d5e5fb" stroke="#8fb6ee" stroke-width="0.9"/></svg><div class="abs" style="left:104.50px;top:537.05px;width:1.00px;height:13.00px;background:#c9cce4"></div><svg class="ic" style="left:111.5px;top:537.75px" width="10" height="12" viewBox="0 0 10 12"><rect x="0" y="0.5" width="10" height="11.5" fill="#f2f2f2"/><circle cx="5" cy="2.6" r="1.4" fill="none" stroke="#444" stroke-width="0.9"/><path d="M3.6 3.8 L6.4 3.8 C8.6 5.4 9.6 7.6 8.8 9.4 Q5 11.4 1.2 9.4 C0.4 7.6 1.4 5.4 3.6 3.8 Z" fill="#4c4c4c"/><ellipse cx="5" cy="9.6" rx="3.6" ry="0.9" fill="#777"/></svg><div class="abs" style="left:128.00px;top:537.05px;width:1.00px;height:13.00px;background:#c9cce4"></div><svg class="ic" style="left:134.5px;top:538.25px" width="12" height="11" viewBox="0 0 12 11"><path d="M0.2 10.4 L0.6 8.6 L2.2 7 C2.8 4.4 5.2 2.4 8.4 1.8 L11.9 0.1 L11.5 2.1 L9.8 2.9 L11.4 3 L10.8 4.7 L8.8 5.2 L10.4 5.6 L9.4 7.2 L6.6 7.6 L7.8 8.3 C6.2 9.6 4.2 9.8 3 9.4 L1.4 10.6 Z" fill="#111"/><path d="M4.6 6.2 L9.6 3.2 M4.8 7.6 L9.2 5.6 M4.4 8.8 L7.4 8" stroke="#fff" stroke-width="0.55" fill="none"/></svg></div></div>
<div class="dlg" style="left:871px;top:735px;width:361px;height:179px;"><div class="abs" style="left:0.00px;top:0.00px;width:361.00px;height:24.00px;background:#fff"></div><svg class="ic" style="left:7px;top:8.6px" width="11" height="8" viewBox="0 0 11 8"><path d="M0 0.6 C1.8 0.5 3.6 1.2 4.7 2.6 L5.5 1.8 L6.3 2.6 C7.4 1.2 9.2 0.5 11 0.6 C10.8 2.4 9.4 3.9 7.4 4.4 L6.6 5 L7 6.6 L5.5 7.6 L4 6.6 L4.4 5 L3.6 4.4 C1.6 3.9 0.2 2.4 0 0.6 Z" fill="#5a2e26"/><path d="M1.2 1.4 C2.4 1.6 3.6 2.4 4.4 3.6 M9.8 1.4 C8.6 1.6 7.4 2.4 6.6 3.6" stroke="#b7928a" stroke-width="0.4" fill="none"/></svg><span class="t ns" style="top:8.57px;font-size:9.6px;left:23.40px;color:#111;">Групповой обсчёт тестов</span><div class="abs" style="left:267.00px;top:11.40px;width:8.00px;height:1.00px;background:#333"></div><div class="abs" style="left:302.20px;top:8.00px;width:8.40px;height:8.00px;border:1px solid #d4d4d4;box-sizing:border-box"></div><svg class="ic" style="left:338px;top:7px" width="10" height="10" viewBox="0 0 10 10"><path d="M0.8 0.8l8.4 8.4M9.2 0.8l-8.4 8.4" stroke="#333" stroke-width="1"/></svg><span class="t dj b" style="top:35.12px;font-size:12.8px;left:21.50px;width:300px;text-align:center;color:#000;left:0;width:343px;">Номера тестов для группового обсчёта</span><div class="dbx" style="left:8.00px;top:56.20px;width:340.50px;height:39.80px;"></div><div class="abs" style="left:24.20px;top:74.20px;width:10.60px;height:10.60px;background:#4a94e4"></div><span class="t " style="top:75.65px;font-size:9.16px;left:39.40px;transform:scaleX(0.9174);transform-origin:0 0;color:#111;">1</span><div class="abs" style="left:55.86px;top:74.20px;width:10.60px;height:10.60px;background:#4a94e4"></div><span class="t " style="top:75.65px;font-size:9.16px;left:71.06px;transform:scaleX(0.9174);transform-origin:0 0;color:#111;">2</span><div class="abs" style="left:87.52px;top:74.20px;width:10.60px;height:10.60px;background:#a4e88e"></div><span class="t " style="top:75.65px;font-size:9.16px;left:102.72px;transform:scaleX(0.9174);transform-origin:0 0;color:#777;">3</span><div class="abs" style="left:119.18px;top:74.20px;width:10.60px;height:10.60px;background:#4b5b66"></div><span class="t " style="top:75.65px;font-size:9.16px;left:134.38px;transform:scaleX(0.9174);transform-origin:0 0;color:#777;">4</span><div class="abs" style="left:150.84px;top:74.20px;width:10.60px;height:10.60px;background:#4b5b66"></div><span class="t " style="top:75.65px;font-size:9.16px;left:166.04px;transform:scaleX(0.9174);transform-origin:0 0;color:#777;">5</span><div class="abs" style="left:182.50px;top:74.20px;width:10.60px;height:10.60px;background:#4b5b66"></div><span class="t " style="top:75.65px;font-size:9.16px;left:197.70px;transform:scaleX(0.9174);transform-origin:0 0;color:#777;">6</span><div class="abs" style="left:214.16px;top:74.20px;width:10.60px;height:10.60px;background:#4b5b66"></div><span class="t " style="top:75.65px;font-size:9.16px;left:229.36px;transform:scaleX(0.9174);transform-origin:0 0;color:#777;">7</span><div class="abs" style="left:245.82px;top:74.20px;width:10.60px;height:10.60px;background:#4b5b66"></div><span class="t " style="top:75.65px;font-size:9.16px;left:261.02px;transform:scaleX(0.9174);transform-origin:0 0;color:#777;">8</span><div class="abs" style="left:277.48px;top:74.20px;width:10.60px;height:10.60px;background:#4b5b66"></div><span class="t " style="top:75.65px;font-size:9.16px;left:292.68px;transform:scaleX(0.9174);transform-origin:0 0;color:#777;">9</span><div class="abs" style="left:309.14px;top:74.20px;width:10.60px;height:10.60px;background:#4b5b66"></div><span class="t " style="top:75.65px;font-size:9.16px;left:324.34px;transform:scaleX(0.9174);transform-origin:0 0;color:#777;">10</span><div class="dbx" style="left:8.00px;top:103.10px;width:340.50px;height:39.60px;"></div><div class="cb dis2" style="left:32.2px;top:118.4px;width:10.2px;height:10.2px"></div><span class="t " style="top:120.25px;font-size:9.27px;left:46.60px;transform:scaleX(0.9174);transform-origin:0 0;color:#858585;">Дыхание</span><div class="cb dis2" style="left:111.4px;top:118.4px;width:10.2px;height:10.2px"></div><span class="t " style="top:120.25px;font-size:9.27px;left:125.80px;transform:scaleX(0.9174);transform-origin:0 0;color:#858585;">ЭДА/КГР</span><div class="cb dis2" style="left:190.7px;top:118.4px;width:10.2px;height:10.2px"></div><span class="t " style="top:120.25px;font-size:9.27px;left:205.10px;transform:scaleX(0.9174);transform-origin:0 0;color:#858585;">ФПГ</span><div class="cb dis2" style="left:269.6px;top:118.4px;width:10.2px;height:10.2px"></div><span class="t " style="top:120.25px;font-size:9.27px;left:284.00px;transform:scaleX(0.9174);transform-origin:0 0;color:#858585;">Манжета</span><div class="db" style="left:111px;top:150.9px;width:60px">OK</div><div class="db" style="left:175px;top:150.9px;width:59.6px">Cancel</div></div>
<div class="dlg" style="left:-3.6px;top:845px;width:361px;height:179px;transform:scale(1.5);"><div class="abs" style="left:0.00px;top:0.00px;width:361.00px;height:24.00px;background:#fff"></div><svg class="ic" style="left:7px;top:8.6px" width="11" height="8" viewBox="0 0 11 8"><path d="M0 0.6 C1.8 0.5 3.6 1.2 4.7 2.6 L5.5 1.8 L6.3 2.6 C7.4 1.2 9.2 0.5 11 0.6 C10.8 2.4 9.4 3.9 7.4 4.4 L6.6 5 L7 6.6 L5.5 7.6 L4 6.6 L4.4 5 L3.6 4.4 C1.6 3.9 0.2 2.4 0 0.6 Z" fill="#5a2e26"/><path d="M1.2 1.4 C2.4 1.6 3.6 2.4 4.4 3.6 M9.8 1.4 C8.6 1.6 7.4 2.4 6.6 3.6" stroke="#b7928a" stroke-width="0.4" fill="none"/></svg><span class="t ns" style="top:8.57px;font-size:9.6px;left:23.40px;color:#8a8a8a;">Групповой обсчёт тестов</span><div class="abs" style="left:267.00px;top:11.40px;width:8.00px;height:1.00px;background:#333"></div><div class="abs" style="left:302.20px;top:8.00px;width:8.40px;height:8.00px;border:1px solid #d4d4d4;box-sizing:border-box"></div><svg class="ic" style="left:338px;top:7px" width="10" height="10" viewBox="0 0 10 10"><path d="M0.8 0.8l8.4 8.4M9.2 0.8l-8.4 8.4" stroke="#333" stroke-width="1"/></svg><span class="t dj b" style="top:35.12px;font-size:12.8px;left:21.50px;width:300px;text-align:center;color:#000;left:0;width:343px;">Номера тестов для группового обсчёта</span><div class="dbx" style="left:8.00px;top:56.20px;width:340.50px;height:39.80px;"></div><div class="abs" style="left:24.20px;top:74.20px;width:10.60px;height:10.60px;background:#e8642c"></div><span class="t " style="top:75.65px;font-size:9.16px;left:39.40px;transform:scaleX(0.9174);transform-origin:0 0;color:#111;">1</span><div class="abs" style="left:55.86px;top:74.20px;width:10.60px;height:10.60px;background:#e8642c"></div><span class="t " style="top:75.65px;font-size:9.16px;left:71.06px;transform:scaleX(0.9174);transform-origin:0 0;color:#111;">2</span><div class="abs" style="left:87.52px;top:74.20px;width:10.60px;height:10.60px;background:#a4e88e"></div><span class="t " style="top:75.65px;font-size:9.16px;left:102.72px;transform:scaleX(0.9174);transform-origin:0 0;color:#777;">3</span><div class="abs" style="left:119.18px;top:74.20px;width:10.60px;height:10.60px;background:#4b5b66"></div><span class="t " style="top:75.65px;font-size:9.16px;left:134.38px;transform:scaleX(0.9174);transform-origin:0 0;color:#777;">4</span><div class="abs" style="left:150.84px;top:74.20px;width:10.60px;height:10.60px;background:#4b5b66"></div><span class="t " style="top:75.65px;font-size:9.16px;left:166.04px;transform:scaleX(0.9174);transform-origin:0 0;color:#777;">5</span><div class="abs" style="left:182.50px;top:74.20px;width:10.60px;height:10.60px;background:#4b5b66"></div><span class="t " style="top:75.65px;font-size:9.16px;left:197.70px;transform:scaleX(0.9174);transform-origin:0 0;color:#777;">6</span><div class="abs" style="left:214.16px;top:74.20px;width:10.60px;height:10.60px;background:#4b5b66"></div><span class="t " style="top:75.65px;font-size:9.16px;left:229.36px;transform:scaleX(0.9174);transform-origin:0 0;color:#777;">7</span><div class="abs" style="left:245.82px;top:74.20px;width:10.60px;height:10.60px;background:#4b5b66"></div><span class="t " style="top:75.65px;font-size:9.16px;left:261.02px;transform:scaleX(0.9174);transform-origin:0 0;color:#777;">8</span><div class="abs" style="left:277.48px;top:74.20px;width:10.60px;height:10.60px;background:#4b5b66"></div><span class="t " style="top:75.65px;font-size:9.16px;left:292.68px;transform:scaleX(0.9174);transform-origin:0 0;color:#777;">9</span><div class="abs" style="left:309.14px;top:74.20px;width:10.60px;height:10.60px;background:#4b5b66"></div><span class="t " style="top:75.65px;font-size:9.16px;left:324.34px;transform:scaleX(0.9174);transform-origin:0 0;color:#777;">10</span><div class="dbx" style="left:8.00px;top:103.10px;width:340.50px;height:39.60px;"></div><div class="cb dis2" style="left:32.2px;top:118.4px;width:10.2px;height:10.2px"><svg width="10" height="10" viewBox="0 0 10 10" style="position:absolute;left:-1px;top:-1px"><path d="M2 5l2 2.4 3.8-5" fill="none" stroke="#9a9a9a" stroke-width="1"/></svg></div><span class="t " style="top:120.25px;font-size:9.27px;left:46.60px;transform:scaleX(0.9174);transform-origin:0 0;color:#858585;">Дыхание</span><div class="cb dis2" style="left:111.4px;top:118.4px;width:10.2px;height:10.2px"><svg width="10" height="10" viewBox="0 0 10 10" style="position:absolute;left:-1px;top:-1px"><path d="M2 5l2 2.4 3.8-5" fill="none" stroke="#9a9a9a" stroke-width="1"/></svg></div><span class="t " style="top:120.25px;font-size:9.27px;left:125.80px;transform:scaleX(0.9174);transform-origin:0 0;color:#858585;">ЭДА/КГР</span><div class="cb dis2" style="left:190.7px;top:118.4px;width:10.2px;height:10.2px"><svg width="10" height="10" viewBox="0 0 10 10" style="position:absolute;left:-1px;top:-1px"><path d="M2 5l2 2.4 3.8-5" fill="none" stroke="#9a9a9a" stroke-width="1"/></svg></div><span class="t " style="top:120.25px;font-size:9.27px;left:205.10px;transform:scaleX(0.9174);transform-origin:0 0;color:#858585;">ФПГ</span><div class="cb dis2" style="left:269.6px;top:118.4px;width:10.2px;height:10.2px"><svg width="10" height="10" viewBox="0 0 10 10" style="position:absolute;left:-1px;top:-1px"><path d="M2 5l2 2.4 3.8-5" fill="none" stroke="#9a9a9a" stroke-width="1"/></svg></div><span class="t " style="top:120.25px;font-size:9.27px;left:284.00px;transform:scaleX(0.9174);transform-origin:0 0;color:#858585;">Манжета</span><div class="db" style="left:111px;top:150.9px;width:60px">OK</div><div class="db" style="left:175px;top:150.9px;width:59.6px">Cancel</div></div>
</body></html>
